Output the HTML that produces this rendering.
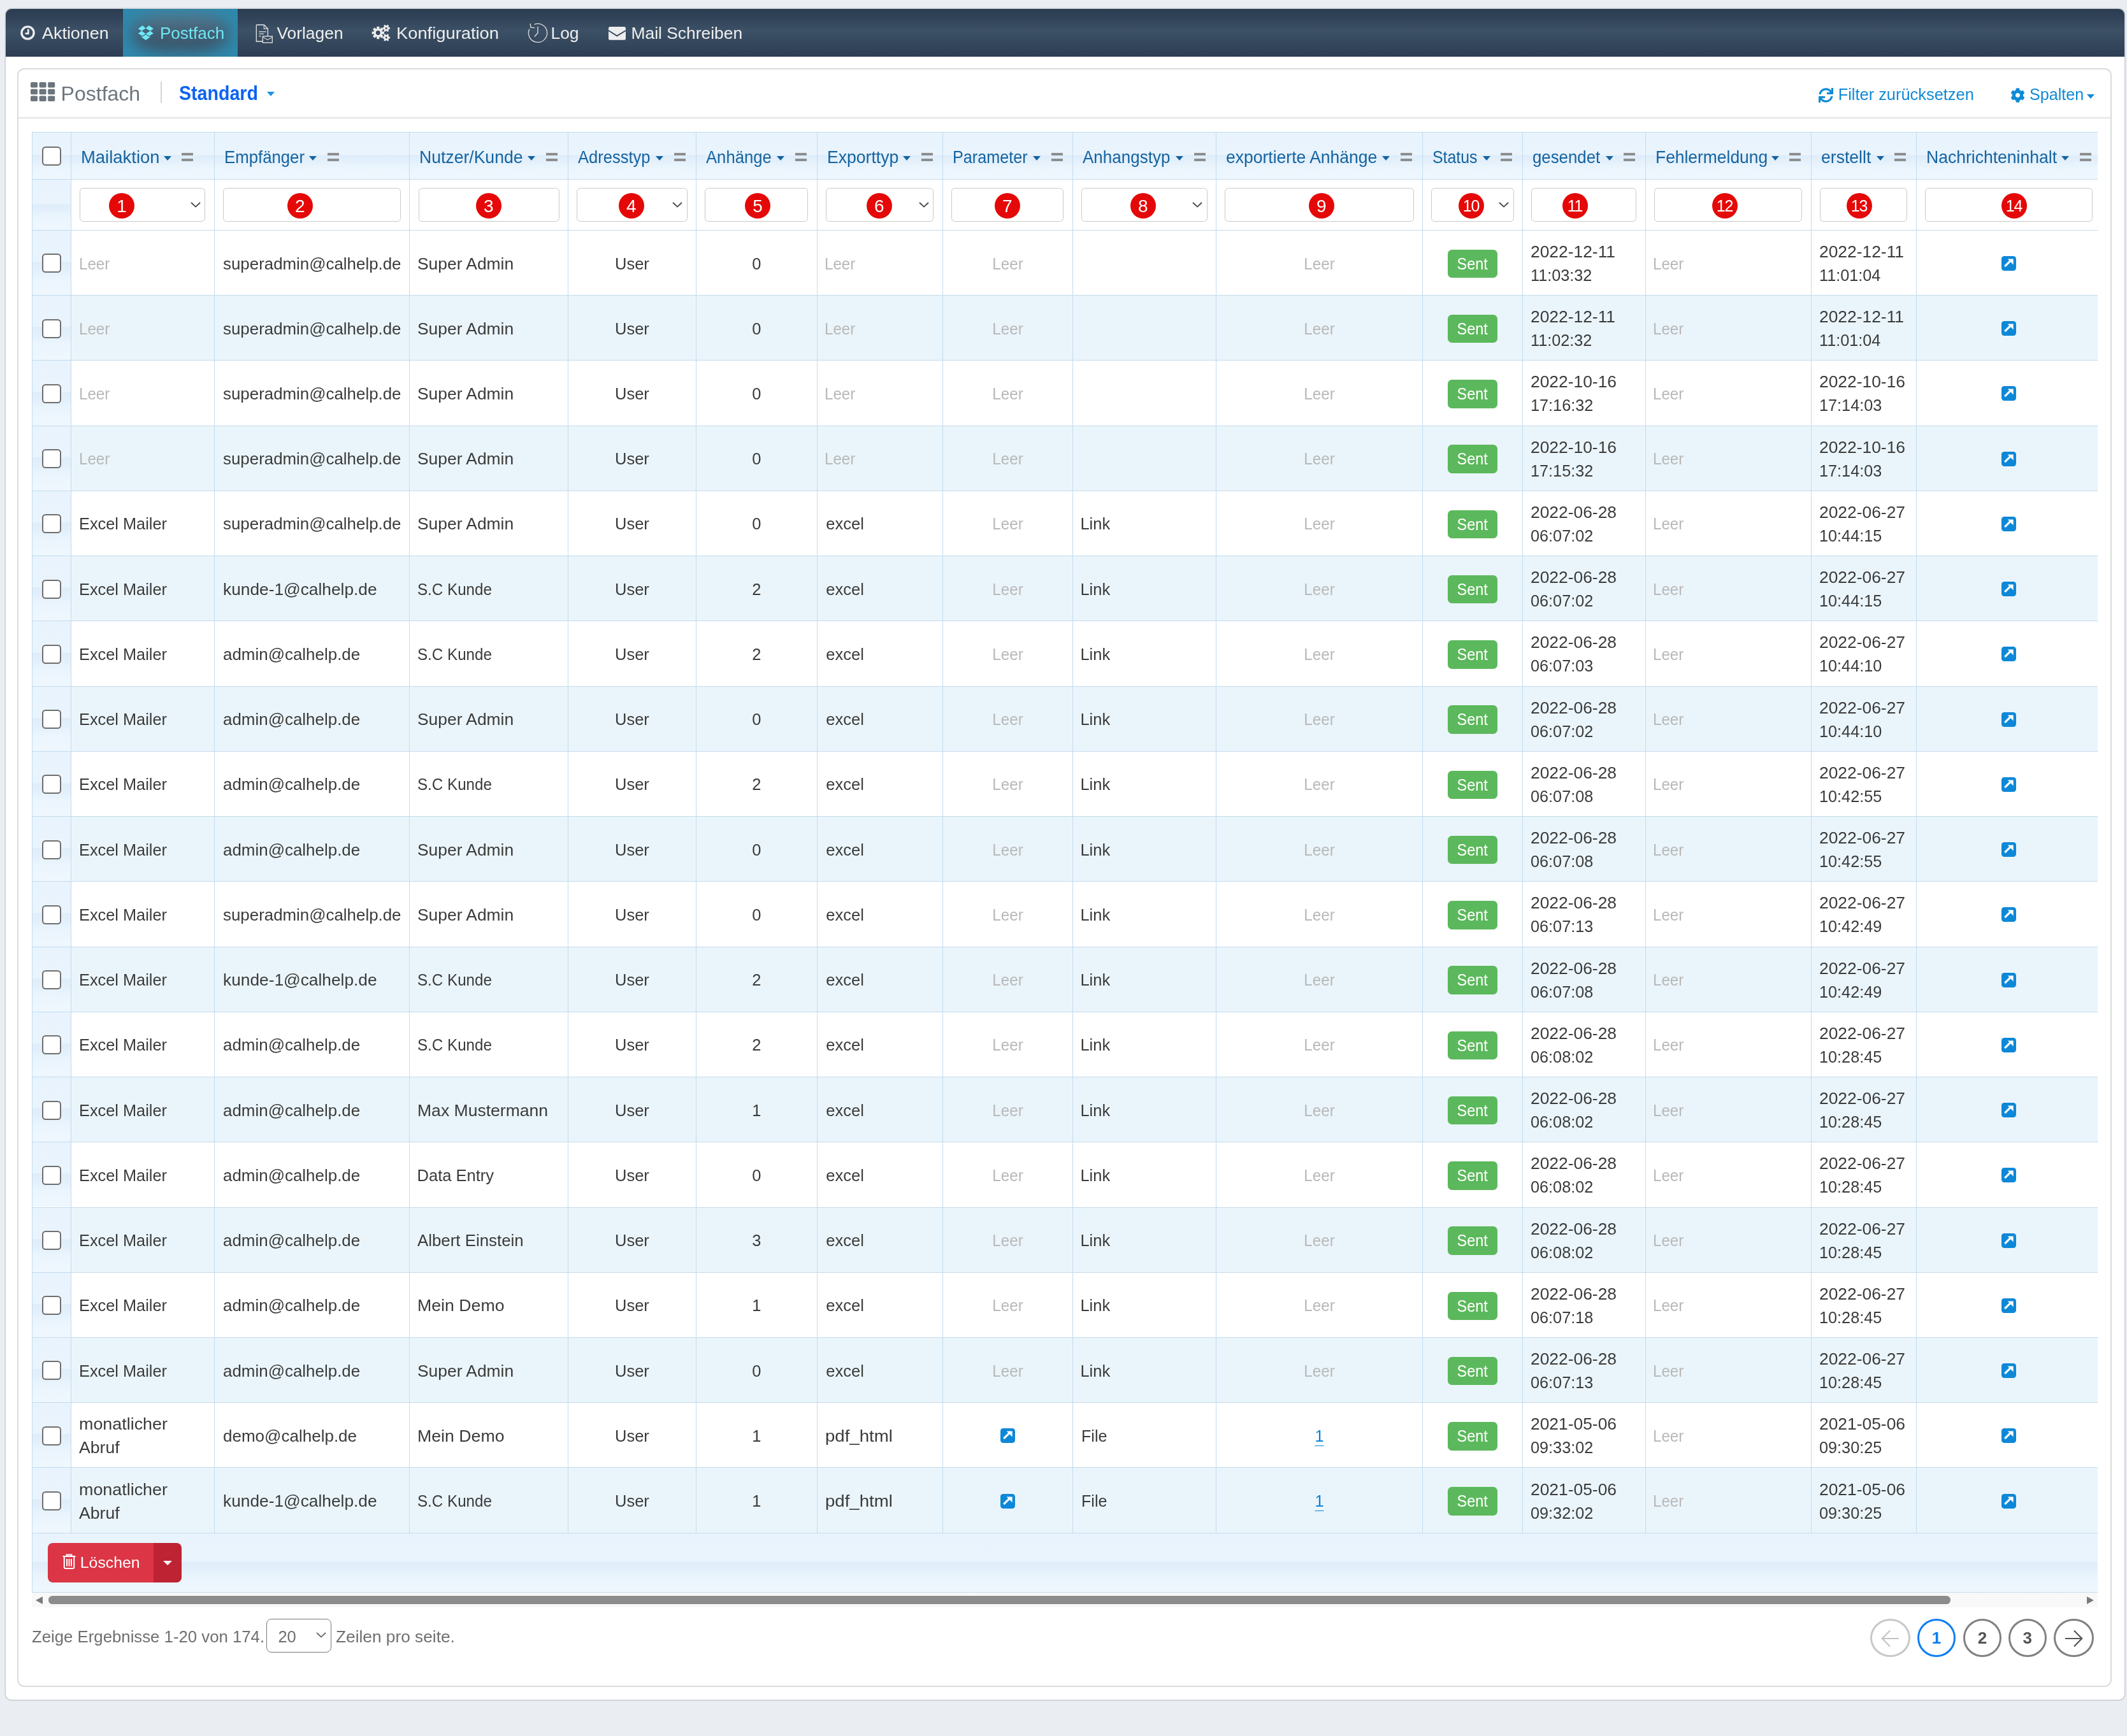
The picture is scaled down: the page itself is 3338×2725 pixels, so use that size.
<!DOCTYPE html><html><head><meta charset="utf-8"><title>Postfach</title><style>
*{box-sizing:border-box;margin:0;padding:0}
html,body{width:3338px;height:2725px;overflow:hidden;background:#eaedf2;font-family:"Liberation Sans",sans-serif;}
.a{position:absolute}
.outer{left:9px;top:13.5px;width:3325px;height:2654.5px;background:#fff;border-radius:9px;box-shadow:0 0 0 1.5px #c9ced3,0 1px 2px rgba(0,0,0,.10)}
.nav{left:9px;top:13.5px;width:3325px;height:75.3px;border-radius:9px 9px 0 0;
  background:linear-gradient(to bottom,#2b3c51 0%,#324459 20%,#3c5066 46%,#34475c 72%,#2c3d52 100%)}
.tab-act{left:193px;top:13.5px;width:180px;height:75.3px;background:#2e89ad;overflow:hidden}
.tab-act:before{content:"";position:absolute;left:14px;top:7px;width:152px;height:62px;border-radius:38%;background:linear-gradient(to bottom,#587b90,#3f5b70 55%,#395469);filter:blur(11px)}
.nt{color:#eeeeee;font-size:26.4px;line-height:30px;white-space:nowrap}
.card{left:27px;top:107px;width:3287px;height:2541px;border:2px solid #dadddd;border-radius:11px;background:#fff}
.hline{left:29px;top:184px;width:3283px;height:2px;background:#e0e2e3}
.tline{background:#c4dbed}
.cell{position:absolute;display:flex;align-items:center;padding:3px 14px 0 14px;font-size:25.5px;line-height:37px;color:#3b3b3b;white-space:nowrap}
.cell.c{justify-content:center}
.cell span{display:inline-block}
.leer{color:#b9b9b9}
.lnk{color:#0b84d4;text-decoration:underline;text-underline-offset:6px;text-decoration-thickness:1.2px}
.cell span.badge{display:inline-block;background:#5cb85c;color:#fff;font-size:25px;line-height:44.5px;height:44.5px;padding:0 13px;border-radius:6.5px;margin-top:0px}
.ico{display:inline-block;width:23px;height:23px;line-height:0;margin-top:-1px}
.ht{font-size:26.9px;color:#1664a0;white-space:nowrap;line-height:30px}
.caret{width:0;height:0;border-left:6.8px solid transparent;border-right:6.8px solid transparent;border-top:7px solid #1664a0}
.handle{width:18px;height:13px;border-top:4.8px solid #8e8e8e;border-bottom:4.8px solid #8e8e8e}
.inp{background:#fff;border:1.5px solid #c9c9c9;border-radius:5.5px}
.chev{width:15.5px;height:8.5px}
.chev svg,.a svg{display:block}
.rb{width:40px;height:40px;border-radius:50%;background:#e50808;color:#fff;font-size:28px;line-height:41px;text-align:center;font-family:"Liberation Sans",sans-serif}
.rb.two{font-size:25px;letter-spacing:-1.2px;text-indent:-1px}
.cb{width:30px;height:30px;border:2.2px solid #6e6e6e;border-radius:5.5px;background:#fff}
.grad{background:linear-gradient(to bottom,#e8f3fd 0%,#eaf4fd 48%,#dfedfa 50%,#e3f0fb 62%,#ebf5fd 76%,#eff7fe 100%)}
.ft{font-size:25.5px;color:#6f6f6f;white-space:nowrap;line-height:30px}
.pg{width:60px;height:60px;border-radius:50%;border:3px solid #808080;display:flex;align-items:center;justify-content:center;font-weight:bold;font-size:26px;color:#555}
</style></head><body><div id="root" style="position:absolute;left:0;top:0;width:3338px;height:2725px;will-change:transform">
<div class="a outer"></div>
<div class="a nav"></div>
<div class="a tab-act"></div>
<svg class="a" style="left:32px;top:40px" width="23" height="23" viewBox="0 0 23 23"><circle cx="11.5" cy="11.5" r="9.6" fill="none" stroke="#eee" stroke-width="3.4"/><path d="M12.3 5.8 V12.6 H7.6" fill="none" stroke="#eee" stroke-width="2.6"/></svg>
<div class="a nt" style="left:65.8px;top:37.15px;transform:scaleX(1.02);transform-origin:0 0">Aktionen</div>
<svg class="a" style="left:210px;top:32px" width="40" height="38" viewBox="0 0 40 38"><g fill="#6fe8f5"><path d="M6.6 13.1 L13.8 8.1 L18.6 12.4 L12.3 16.6 Z"/><path d="M18.6 12.4 L23.6 8.1 L30.9 13.1 L26 16.6 Z"/><path d="M6.6 20.6 L12.3 16.6 L18.6 20.9 L13.6 24.6 Z"/><path d="M18.6 20.9 L26 16.6 L30.9 20.6 L24 24.6 Z"/><path d="M10.9 25.6 L13.6 25.4 L18.8 22.1 L24 25.4 L26.7 25.6 L18.8 30.9 Z"/></g><path d="M13.3 25.2 L18.8 21.7 L24.3 25.2" fill="none" stroke="#3f5d72" stroke-width="0.9"/></svg>
<div class="a nt" style="left:251px;top:37.15px;color:#6fe6f3;transform:scaleX(0.985);transform-origin:0 0">Postfach</div>
<svg class="a" style="left:401px;top:38.3px" width="28" height="30" viewBox="0 0 28 30"><path d="M1.3 1 H13.3 L19.3 7 V22 M1.3 1 V27 H11.5" fill="none" stroke="#e6e6e6" stroke-width="1.3"/><path d="M13.3 1.5 V7 H19" fill="none" stroke="#c8cdd3" stroke-width="1.3"/><path d="M5.3 11.7 H16.5 M5.3 15.3 H13 M5.3 18.8 H8.5" stroke="#c0c6cd" stroke-width="1.4"/><rect x="11.3" y="19" width="15" height="10" fill="#34475c" stroke="#e6e6e6" stroke-width="1.3"/><path d="M12 20.5 L19 24.5 L26 20.5" fill="none" stroke="#c8cdd3" stroke-width="1.3"/></svg>
<div class="a nt" style="left:434.4px;top:37.15px">Vorlagen</div>
<svg class="a" style="left:583px;top:37px" width="30" height="30" viewBox="0 0 30 30"><g fill="#eee"><circle cx="10.3" cy="14.5" r="6.6"/><rect x="8.2" y="4.85" width="4.2" height="19.3" rx="0.4" transform="rotate(0 10.3 14.5)"/><rect x="8.2" y="4.85" width="4.2" height="19.3" rx="0.4" transform="rotate(45 10.3 14.5)"/><rect x="8.2" y="4.85" width="4.2" height="19.3" rx="0.4" transform="rotate(90 10.3 14.5)"/><rect x="8.2" y="4.85" width="4.2" height="19.3" rx="0.4" transform="rotate(135 10.3 14.5)"/><circle cx="23.2" cy="7.3" r="4.3"/><rect x="21.9" y="1.4" width="2.6" height="11.8" rx="0.4" transform="rotate(90 23.2 7.3)"/><rect x="21.9" y="1.4" width="2.6" height="11.8" rx="0.4" transform="rotate(150 23.2 7.3)"/><rect x="21.9" y="1.4" width="2.6" height="11.8" rx="0.4" transform="rotate(210 23.2 7.3)"/><circle cx="23.2" cy="22" r="4.3"/><rect x="21.9" y="16.1" width="2.6" height="11.8" rx="0.4" transform="rotate(90 23.2 22)"/><rect x="21.9" y="16.1" width="2.6" height="11.8" rx="0.4" transform="rotate(150 23.2 22)"/><rect x="21.9" y="16.1" width="2.6" height="11.8" rx="0.4" transform="rotate(210 23.2 22)"/></g><circle cx="10.3" cy="14.5" r="3.4" fill="#36495f"/><circle cx="23.2" cy="7.3" r="1.5" fill="#36495f"/><circle cx="23.2" cy="22" r="1.5" fill="#36495f"/></svg>
<div class="a nt" style="left:621.5px;top:37.15px;transform:scaleX(1.035);transform-origin:0 0">Konfiguration</div>
<svg class="a" style="left:820px;top:25px" width="44" height="50" viewBox="0 0 44 50"><path d="M10.77 20.63 A14.6 14.6 0 1 0 18.53 13.26" fill="none" stroke="#dcdcdc" stroke-width="1.35"/><path d="M12.3 12 L12.9 18.2 L19.2 18.6" fill="none" stroke="#dcdcdc" stroke-width="1.4"/><path d="M24 16.4 V26.8 L18.8 32.4" fill="none" stroke="#dcdcdc" stroke-width="1.4"/></svg>
<div class="a nt" style="left:864.5px;top:37.15px">Log</div>
<svg class="a" style="left:955px;top:42.2px" width="27" height="21" viewBox="0 0 27 21"><rect x="0" y="0" width="27" height="20.8" rx="2.6" fill="#eee"/><path d="M0 6 L13.3 14.4 L27 6" fill="none" stroke="#34475c" stroke-width="1.9"/></svg>
<div class="a nt" style="left:990.5px;top:37.15px">Mail Schreiben</div>
<div class="a card"></div>
<div class="a hline"></div>
<svg class="a" style="left:47.9px;top:129px" width="39" height="31" viewBox="0 0 39 31"><rect x="0" y="0" width="11" height="8.6" rx="1.8" fill="#6c757d"/><rect x="13.6" y="0" width="11" height="8.6" rx="1.8" fill="#6c757d"/><rect x="27.2" y="0" width="11" height="8.6" rx="1.8" fill="#6c757d"/><rect x="0" y="10.7" width="11" height="8.6" rx="1.8" fill="#6c757d"/><rect x="13.6" y="10.7" width="11" height="8.6" rx="1.8" fill="#6c757d"/><rect x="27.2" y="10.7" width="11" height="8.6" rx="1.8" fill="#6c757d"/><rect x="0" y="21.4" width="11" height="8.6" rx="1.8" fill="#6c757d"/><rect x="13.6" y="21.4" width="11" height="8.6" rx="1.8" fill="#6c757d"/><rect x="27.2" y="21.4" width="11" height="8.6" rx="1.8" fill="#6c757d"/></svg>
<div class="a" style="left:95.6px;top:124.8px;font-size:32px;line-height:44px;color:#6c757d;white-space:nowrap">Postfach</div>
<div class="a" style="left:252px;top:128px;width:1.5px;height:34px;background:#d4d4d4"></div>
<div class="a" style="left:281px;top:124.76px;font-size:31px;line-height:44px;color:#0b63f0;font-weight:bold;white-space:nowrap;transform:scaleX(0.922);transform-origin:0 0">Standard</div>
<div class="a caret" style="left:419.3px;top:144px;border-left-width:6.7px;border-right-width:6.7px;border-top-width:7.3px;border-top-color:#1a92e2"></div>
<svg class="a" style="left:2853.5px;top:138px" width="23" height="23" viewBox="0 0 512 512"><path fill="#118ad6" d="M440.65 12.57l4 82.77A247.16 247.16 0 0 0 255.83 8C134.73 8 33.91 94.92 12.29 209.82A12 12 0 0 0 24.09 224h49.05a12 12 0 0 0 11.67-9.26 175.91 175.91 0 0 1 317-56.94l-101.46-4.86a12 12 0 0 0-12.57 12v47.41a12 12 0 0 0 12 12H500a12 12 0 0 0 12-12V12a12 12 0 0 0-12-12h-47.37a12 12 0 0 0-11.98 12.57zM255.83 432a175.61 175.61 0 0 1-146-77.8l101.8 4.87a12 12 0 0 0 12.57-12v-47.4a12 12 0 0 0-12-12H12a12 12 0 0 0-12 12V500a12 12 0 0 0 12 12h47.35a12 12 0 0 0 12-12.6l-4.15-82.57A247.17 247.17 0 0 0 255.83 504c121.11 0 221.93-86.92 243.55-201.82a12 12 0 0 0-11.8-14.18h-49.05a12 12 0 0 0-11.67 9.26A175.86 175.86 0 0 1 255.83 432z"/></svg>
<div class="a" style="left:2884.7px;top:130px;font-size:25.4px;line-height:36px;color:#118ad6;white-space:nowrap">Filter zurücksetzen</div>
<svg class="a" style="left:3154.6px;top:138px" width="23" height="23" viewBox="0 0 512 512"><path fill="#118ad6" d="M487.4 315.7l-42.6-24.6c4.3-23.2 4.3-47 0-70.2l42.6-24.6c4.9-2.8 7.1-8.6 5.5-14-11.1-35.6-30-67.8-54.7-94.6-3.8-4.1-10-5.1-14.8-2.3L380.8 110c-17.9-15.4-38.5-27.3-60.8-35.1V25.8c0-5.6-3.9-10.5-9.4-11.7-36.7-8.2-74.3-7.8-109.2 0-5.5 1.2-9.4 6.1-9.4 11.7V75c-22.2 7.9-42.8 19.8-60.8 35.1L88.7 85.5c-4.9-2.8-11-1.9-14.8 2.3-24.7 26.7-43.6 58.9-54.7 94.6-1.7 5.4.6 11.2 5.5 14L67.3 221c-4.3 23.2-4.3 47 0 70.2l-42.6 24.6c-4.9 2.8-7.1 8.6-5.5 14 11.1 35.6 30 67.8 54.7 94.6 3.8 4.1 10 5.1 14.8 2.3l42.6-24.6c17.9 15.4 38.5 27.3 60.8 35.1v49.2c0 5.6 3.9 10.5 9.4 11.7 36.7 8.2 74.3 7.8 109.2 0 5.5-1.2 9.4-6.1 9.4-11.7v-49.2c22.2-7.9 42.8-19.8 60.8-35.1l42.6 24.6c4.9 2.8 11 1.9 14.8-2.3 24.7-26.7 43.6-58.9 54.7-94.6 1.5-5.5-.7-11.3-5.6-14.1zM256 336c-44.1 0-80-35.9-80-80s35.9-80 80-80 80 35.9 80 80-35.9 80-80 80z"/></svg>
<div class="a" style="left:3185px;top:130px;font-size:25.1px;line-height:36px;color:#118ad6;white-space:nowrap">Spalten</div>
<div class="a caret" style="left:3275px;top:147.5px;border-top-color:#118ad6;border-left-width:6.8px;border-right-width:6.8px;border-top-width:7px"></div>
<div class="a" style="left:50px;top:207px;width:3242px;height:2316.5px;overflow:hidden">
<div class="a grad" style="left:0px;top:0px;width:3247px;height:74px"></div>
<div class="a grad" style="left:0px;top:74px;width:61px;height:80px"></div>
<div class="a grad" style="left:0px;top:154px;width:61px;height:102px"></div>
<div class="a " style="left:61px;top:256px;width:3186px;height:102px;background:#eaf5fb"></div>
<div class="a grad" style="left:0px;top:256px;width:61px;height:102px"></div>
<div class="a grad" style="left:0px;top:358px;width:61px;height:103px"></div>
<div class="a " style="left:61px;top:461px;width:3186px;height:102px;background:#eaf5fb"></div>
<div class="a grad" style="left:0px;top:461px;width:61px;height:102px"></div>
<div class="a grad" style="left:0px;top:563px;width:61px;height:102px"></div>
<div class="a " style="left:61px;top:665px;width:3186px;height:102px;background:#eaf5fb"></div>
<div class="a grad" style="left:0px;top:665px;width:61px;height:102px"></div>
<div class="a grad" style="left:0px;top:767px;width:61px;height:103px"></div>
<div class="a " style="left:61px;top:870px;width:3186px;height:102px;background:#eaf5fb"></div>
<div class="a grad" style="left:0px;top:870px;width:61px;height:102px"></div>
<div class="a grad" style="left:0px;top:972px;width:61px;height:102px"></div>
<div class="a " style="left:61px;top:1074px;width:3186px;height:102px;background:#eaf5fb"></div>
<div class="a grad" style="left:0px;top:1074px;width:61px;height:102px"></div>
<div class="a grad" style="left:0px;top:1176px;width:61px;height:103px"></div>
<div class="a " style="left:61px;top:1279px;width:3186px;height:102px;background:#eaf5fb"></div>
<div class="a grad" style="left:0px;top:1279px;width:61px;height:102px"></div>
<div class="a grad" style="left:0px;top:1381px;width:61px;height:102px"></div>
<div class="a " style="left:61px;top:1483px;width:3186px;height:102px;background:#eaf5fb"></div>
<div class="a grad" style="left:0px;top:1483px;width:61px;height:102px"></div>
<div class="a grad" style="left:0px;top:1585px;width:61px;height:102px"></div>
<div class="a " style="left:61px;top:1688px;width:3186px;height:102px;background:#eaf5fb"></div>
<div class="a grad" style="left:0px;top:1688px;width:61px;height:102px"></div>
<div class="a grad" style="left:0px;top:1790px;width:61px;height:102px"></div>
<div class="a " style="left:61px;top:1892px;width:3186px;height:102px;background:#eaf5fb"></div>
<div class="a grad" style="left:0px;top:1892px;width:61px;height:102px"></div>
<div class="a grad" style="left:0px;top:1994px;width:61px;height:102px"></div>
<div class="a " style="left:61px;top:2096px;width:3186px;height:103px;background:#eaf5fb"></div>
<div class="a grad" style="left:0px;top:2096px;width:61px;height:103px"></div>
<div class="a grad" style="left:0px;top:2199px;width:3247px;height:93px"></div>
<div class="a tline" style="left:0;top:0px;width:3247.6px;height:1px"></div>
<div class="a tline" style="left:0;top:74px;width:3247.6px;height:1px"></div>
<div class="a tline" style="left:0;top:154px;width:3247.6px;height:1px"></div>
<div class="a tline" style="left:0;top:256px;width:3247.6px;height:1px"></div>
<div class="a tline" style="left:0;top:358px;width:3247.6px;height:1px"></div>
<div class="a tline" style="left:0;top:461px;width:3247.6px;height:1px"></div>
<div class="a tline" style="left:0;top:563px;width:3247.6px;height:1px"></div>
<div class="a tline" style="left:0;top:665px;width:3247.6px;height:1px"></div>
<div class="a tline" style="left:0;top:767px;width:3247.6px;height:1px"></div>
<div class="a tline" style="left:0;top:870px;width:3247.6px;height:1px"></div>
<div class="a tline" style="left:0;top:972px;width:3247.6px;height:1px"></div>
<div class="a tline" style="left:0;top:1074px;width:3247.6px;height:1px"></div>
<div class="a tline" style="left:0;top:1176px;width:3247.6px;height:1px"></div>
<div class="a tline" style="left:0;top:1279px;width:3247.6px;height:1px"></div>
<div class="a tline" style="left:0;top:1381px;width:3247.6px;height:1px"></div>
<div class="a tline" style="left:0;top:1483px;width:3247.6px;height:1px"></div>
<div class="a tline" style="left:0;top:1585px;width:3247.6px;height:1px"></div>
<div class="a tline" style="left:0;top:1688px;width:3247.6px;height:1px"></div>
<div class="a tline" style="left:0;top:1790px;width:3247.6px;height:1px"></div>
<div class="a tline" style="left:0;top:1892px;width:3247.6px;height:1px"></div>
<div class="a tline" style="left:0;top:1994px;width:3247.6px;height:1px"></div>
<div class="a tline" style="left:0;top:2096px;width:3247.6px;height:1px"></div>
<div class="a tline" style="left:0;top:2199px;width:3247.6px;height:1px"></div>
<div class="a tline" style="left:0;top:2292px;width:3247.6px;height:1px"></div>
<div class="a tline" style="left:0;top:0;width:1px;height:2292.6px"></div>
<div class="a tline" style="left:61px;top:0;width:1px;height:2199px"></div>
<div class="a tline" style="left:286px;top:0;width:1px;height:2199px"></div>
<div class="a tline" style="left:592px;top:0;width:1px;height:2199px"></div>
<div class="a tline" style="left:841px;top:0;width:1px;height:2199px"></div>
<div class="a tline" style="left:1042px;top:0;width:1px;height:2199px"></div>
<div class="a tline" style="left:1232px;top:0;width:1px;height:2199px"></div>
<div class="a tline" style="left:1429px;top:0;width:1px;height:2199px"></div>
<div class="a tline" style="left:1633px;top:0;width:1px;height:2199px"></div>
<div class="a tline" style="left:1858px;top:0;width:1px;height:2199px"></div>
<div class="a tline" style="left:2182px;top:0;width:1px;height:2199px"></div>
<div class="a tline" style="left:2339px;top:0;width:1px;height:2199px"></div>
<div class="a tline" style="left:2532px;top:0;width:1px;height:2199px"></div>
<div class="a tline" style="left:2792px;top:0;width:1px;height:2199px"></div>
<div class="a tline" style="left:2957px;top:0;width:1px;height:2199px"></div>
<div class="a tline" style="left:3247px;top:0;width:1px;height:2199px"></div>
<div class="a cb" style="left:16.1px;top:23.3px"></div>
<div class="a ht" style="left:77.1px;top:24.88px;transform:scaleX(1.02);transform-origin:0 0">Mailaktion</div>
<div class="a caret" style="left:207.1px;top:37.8px"></div>
<div class="a handle" style="left:235.3px;top:33px"></div>
<div class="a ht" style="left:301.9px;top:24.88px;transform:scaleX(0.958);transform-origin:0 0">Empfänger</div>
<div class="a caret" style="left:435px;top:37.8px"></div>
<div class="a handle" style="left:463.8px;top:33px"></div>
<div class="a ht" style="left:608.2px;top:24.88px;transform:scaleX(0.988);transform-origin:0 0">Nutzer/Kunde</div>
<div class="a caret" style="left:777.9px;top:37.8px"></div>
<div class="a handle" style="left:807.3px;top:33px"></div>
<div class="a ht" style="left:857px;top:24.88px;transform:scaleX(0.949);transform-origin:0 0">Adresstyp</div>
<div class="a caret" style="left:978.8px;top:37.8px"></div>
<div class="a handle" style="left:1007.8px;top:33px"></div>
<div class="a ht" style="left:1058.1px;top:24.88px;transform:scaleX(0.954);transform-origin:0 0">Anhänge</div>
<div class="a caret" style="left:1169.1px;top:37.8px"></div>
<div class="a handle" style="left:1198.1px;top:33px"></div>
<div class="a ht" style="left:1247.9px;top:24.88px;transform:scaleX(0.989);transform-origin:0 0">Exporttyp</div>
<div class="a caret" style="left:1367.1px;top:37.8px"></div>
<div class="a handle" style="left:1395.9px;top:33px"></div>
<div class="a ht" style="left:1444.9px;top:24.88px;transform:scaleX(0.937);transform-origin:0 0">Parameter</div>
<div class="a caret" style="left:1571px;top:37.8px"></div>
<div class="a handle" style="left:1599.8px;top:33px"></div>
<div class="a ht" style="left:1649px;top:24.88px;transform:scaleX(0.967);transform-origin:0 0">Anhangstyp</div>
<div class="a caret" style="left:1795px;top:37.8px"></div>
<div class="a handle" style="left:1823.8px;top:33px"></div>
<div class="a ht" style="left:1874.1px;top:24.88px;transform:scaleX(0.986);transform-origin:0 0">exportierte Anhänge</div>
<div class="a caret" style="left:2119.3px;top:37.8px"></div>
<div class="a handle" style="left:2147.5px;top:33px"></div>
<div class="a ht" style="left:2198.1px;top:24.88px;transform:scaleX(0.925);transform-origin:0 0">Status</div>
<div class="a caret" style="left:2276.7px;top:37.8px"></div>
<div class="a handle" style="left:2304.9px;top:33px"></div>
<div class="a ht" style="left:2355.1px;top:24.88px;transform:scaleX(0.96);transform-origin:0 0">gesendet</div>
<div class="a caret" style="left:2469.5px;top:37.8px"></div>
<div class="a handle" style="left:2497.7px;top:33px"></div>
<div class="a ht" style="left:2548px;top:24.88px;transform:scaleX(0.982);transform-origin:0 0">Fehlermeldung</div>
<div class="a caret" style="left:2729.6px;top:37.8px"></div>
<div class="a handle" style="left:2758.1px;top:33px"></div>
<div class="a ht" style="left:2808px;top:24.88px;transform:scaleX(0.989);transform-origin:0 0">erstellt</div>
<div class="a caret" style="left:2894.8px;top:37.8px"></div>
<div class="a handle" style="left:2923px;top:33px"></div>
<div class="a ht" style="left:2973px;top:24.88px;transform:scaleX(0.987);transform-origin:0 0">Nachrichteninhalt</div>
<div class="a caret" style="left:3185px;top:37.8px"></div>
<div class="a handle" style="left:3213.5px;top:33px"></div>
<div class="a inp" style="left:75.4px;top:88px;width:197px;height:53px"></div>
<div class="a chev" style="left:249.2px;top:110.2px"><svg width="16" height="9" viewBox="0 0 16 9"><path d="M1 1 L8 7.6 L15 1" fill="none" stroke="#444" stroke-width="1.8"/></svg></div>
<div class="a rb" style="left:121px;top:95.8px">1</div>
<div class="a inp" style="left:300.2px;top:88px;width:278.5px;height:53px"></div>
<div class="a rb" style="left:400.7px;top:95.8px">2</div>
<div class="a inp" style="left:606.5px;top:88px;width:221px;height:53px"></div>
<div class="a rb" style="left:696.9px;top:95.8px">3</div>
<div class="a inp" style="left:855.3px;top:88px;width:173.3px;height:53px"></div>
<div class="a chev" style="left:1005.4px;top:110.2px"><svg width="16" height="9" viewBox="0 0 16 9"><path d="M1 1 L8 7.6 L15 1" fill="none" stroke="#444" stroke-width="1.8"/></svg></div>
<div class="a rb" style="left:920.8px;top:95.8px">4</div>
<div class="a inp" style="left:1056.4px;top:88px;width:162px;height:53px"></div>
<div class="a rb" style="left:1119px;top:95.8px">5</div>
<div class="a inp" style="left:1246.2px;top:88px;width:169.2px;height:53px"></div>
<div class="a chev" style="left:1392.2px;top:110.2px"><svg width="16" height="9" viewBox="0 0 16 9"><path d="M1 1 L8 7.6 L15 1" fill="none" stroke="#444" stroke-width="1.8"/></svg></div>
<div class="a rb" style="left:1309.9px;top:95.8px">6</div>
<div class="a inp" style="left:1443.2px;top:88px;width:176.3px;height:53px"></div>
<div class="a rb" style="left:1510.9px;top:95.8px">7</div>
<div class="a inp" style="left:1647.3px;top:88px;width:197.3px;height:53px"></div>
<div class="a chev" style="left:1821.4px;top:110.2px"><svg width="16" height="9" viewBox="0 0 16 9"><path d="M1 1 L8 7.6 L15 1" fill="none" stroke="#444" stroke-width="1.8"/></svg></div>
<div class="a rb" style="left:1723.9px;top:95.8px">8</div>
<div class="a inp" style="left:1872.4px;top:88px;width:296.2px;height:53px"></div>
<div class="a rb" style="left:2003.8px;top:95.8px">9</div>
<div class="a inp" style="left:2196.4px;top:88px;width:129.2px;height:53px"></div>
<div class="a chev" style="left:2302.4px;top:110.2px"><svg width="16" height="9" viewBox="0 0 16 9"><path d="M1 1 L8 7.6 L15 1" fill="none" stroke="#444" stroke-width="1.8"/></svg></div>
<div class="a rb two" style="left:2238.9px;top:95.8px">10</div>
<div class="a inp" style="left:2353.4px;top:88px;width:165.1px;height:53px"></div>
<div class="a rb two" style="left:2402px;top:95.8px">11</div>
<div class="a inp" style="left:2546.3px;top:88px;width:232.2px;height:53px"></div>
<div class="a rb two" style="left:2637px;top:95.8px">12</div>
<div class="a inp" style="left:2806.3px;top:88px;width:137.2px;height:53px"></div>
<div class="a rb two" style="left:2847.9px;top:95.8px">13</div>
<div class="a inp" style="left:2971.3px;top:88px;width:262.4px;height:53px"></div>
<div class="a rb two" style="left:3090.9px;top:95.8px">14</div>
<div class="a cb" style="left:16.1px;top:191.4px"></div>
<div class="cell" style="left:61.5px;top:154.4px;width:224.8px;height:102.24px"><span class="leer" style="transform:scaleX(0.947);transform-origin:0 50%;margin-left:-2px">Leer</span></div>
<div class="cell" style="left:286.3px;top:154.4px;width:306.3px;height:102.24px"><div><div><span style="transform:scaleX(1.015);transform-origin:0 50%">superadmin@calhelp.de</span></div></div></div>
<div class="cell" style="left:592.6px;top:154.4px;width:248.8px;height:102.24px"><div><div><span style="transform:scaleX(1.035);transform-origin:0 50%;margin-left:-2px">Super Admin</span></div></div></div>
<div class="cell c" style="left:841.4px;top:154.4px;width:201.1px;height:102.24px"><div><div><span>User</span></div></div></div>
<div class="cell c" style="left:1042.5px;top:154.4px;width:189.8px;height:102.24px"><div><div><span>0</span></div></div></div>
<div class="cell" style="left:1232.3px;top:154.4px;width:197px;height:102.24px"><span class="leer" style="transform:scaleX(0.947);transform-origin:0 50%;margin-left:-2px">Leer</span></div>
<div class="cell c" style="left:1429.3px;top:154.4px;width:204.1px;height:102.24px"><span class="leer" style="transform:scaleX(0.947);transform-origin:50% 50%">Leer</span></div>
<div class="cell" style="left:1633.4px;top:154.4px;width:225.1px;height:102.24px"><div><div><span style="margin-left:-1.8px"></span></div></div></div>
<div class="cell c" style="left:1858.5px;top:154.4px;width:324px;height:102.24px"><span class="leer" style="transform:scaleX(0.947);transform-origin:50% 50%">Leer</span></div>
<div class="cell c" style="left:2182.5px;top:154.4px;width:157px;height:102.24px"><span class="badge"><span style="transform:scaleX(0.94);transform-origin:50% 50%">Sent</span></span></div>
<div class="cell" style="left:2339.5px;top:154.4px;width:192.9px;height:102.24px"><div><div><span style="transform:scaleX(1.035);transform-origin:0 50%;margin-left:-1.5px">2022-12-11</span></div><div><span style="transform:scaleX(0.99);transform-origin:0 50%;margin-left:-1.5px">11:03:32</span></div></div></div>
<div class="cell" style="left:2532.4px;top:154.4px;width:260px;height:102.24px"><span class="leer" style="transform:scaleX(0.947);transform-origin:0 50%;margin-left:-2px">Leer</span></div>
<div class="cell" style="left:2792.4px;top:154.4px;width:165px;height:102.24px"><div><div><span style="transform:scaleX(1.035);transform-origin:0 50%;margin-left:-1.5px">2022-12-11</span></div><div><span style="transform:scaleX(0.99);transform-origin:0 50%;margin-left:-1.5px">11:01:04</span></div></div></div>
<div class="cell c" style="left:2957.4px;top:154.4px;width:290.2px;height:102.24px"><span class="ico"><svg width="23" height="23" viewBox="0 0 23 23"><rect x="0" y="0" width="23" height="23" rx="4.5" fill="#0d88d8"/><path d="M5.2 16.2 L13.6 7.8" stroke="#fff" stroke-width="3.2" stroke-linecap="butt"/><path d="M9.6 4.4 H18.6 V13.4 Z" fill="#fff"/></svg></span></div>
<div class="a cb" style="left:16.1px;top:293.64px"></div>
<div class="cell" style="left:61.5px;top:256.64px;width:224.8px;height:102.24px"><span class="leer" style="transform:scaleX(0.947);transform-origin:0 50%;margin-left:-2px">Leer</span></div>
<div class="cell" style="left:286.3px;top:256.64px;width:306.3px;height:102.24px"><div><div><span style="transform:scaleX(1.015);transform-origin:0 50%">superadmin@calhelp.de</span></div></div></div>
<div class="cell" style="left:592.6px;top:256.64px;width:248.8px;height:102.24px"><div><div><span style="transform:scaleX(1.035);transform-origin:0 50%;margin-left:-2px">Super Admin</span></div></div></div>
<div class="cell c" style="left:841.4px;top:256.64px;width:201.1px;height:102.24px"><div><div><span>User</span></div></div></div>
<div class="cell c" style="left:1042.5px;top:256.64px;width:189.8px;height:102.24px"><div><div><span>0</span></div></div></div>
<div class="cell" style="left:1232.3px;top:256.64px;width:197px;height:102.24px"><span class="leer" style="transform:scaleX(0.947);transform-origin:0 50%;margin-left:-2px">Leer</span></div>
<div class="cell c" style="left:1429.3px;top:256.64px;width:204.1px;height:102.24px"><span class="leer" style="transform:scaleX(0.947);transform-origin:50% 50%">Leer</span></div>
<div class="cell" style="left:1633.4px;top:256.64px;width:225.1px;height:102.24px"><div><div><span style="margin-left:-1.8px"></span></div></div></div>
<div class="cell c" style="left:1858.5px;top:256.64px;width:324px;height:102.24px"><span class="leer" style="transform:scaleX(0.947);transform-origin:50% 50%">Leer</span></div>
<div class="cell c" style="left:2182.5px;top:256.64px;width:157px;height:102.24px"><span class="badge"><span style="transform:scaleX(0.94);transform-origin:50% 50%">Sent</span></span></div>
<div class="cell" style="left:2339.5px;top:256.64px;width:192.9px;height:102.24px"><div><div><span style="transform:scaleX(1.035);transform-origin:0 50%;margin-left:-1.5px">2022-12-11</span></div><div><span style="transform:scaleX(0.99);transform-origin:0 50%;margin-left:-1.5px">11:02:32</span></div></div></div>
<div class="cell" style="left:2532.4px;top:256.64px;width:260px;height:102.24px"><span class="leer" style="transform:scaleX(0.947);transform-origin:0 50%;margin-left:-2px">Leer</span></div>
<div class="cell" style="left:2792.4px;top:256.64px;width:165px;height:102.24px"><div><div><span style="transform:scaleX(1.035);transform-origin:0 50%;margin-left:-1.5px">2022-12-11</span></div><div><span style="transform:scaleX(0.99);transform-origin:0 50%;margin-left:-1.5px">11:01:04</span></div></div></div>
<div class="cell c" style="left:2957.4px;top:256.64px;width:290.2px;height:102.24px"><span class="ico"><svg width="23" height="23" viewBox="0 0 23 23"><rect x="0" y="0" width="23" height="23" rx="4.5" fill="#0d88d8"/><path d="M5.2 16.2 L13.6 7.8" stroke="#fff" stroke-width="3.2" stroke-linecap="butt"/><path d="M9.6 4.4 H18.6 V13.4 Z" fill="#fff"/></svg></span></div>
<div class="a cb" style="left:16.1px;top:395.88px"></div>
<div class="cell" style="left:61.5px;top:358.88px;width:224.8px;height:102.24px"><span class="leer" style="transform:scaleX(0.947);transform-origin:0 50%;margin-left:-2px">Leer</span></div>
<div class="cell" style="left:286.3px;top:358.88px;width:306.3px;height:102.24px"><div><div><span style="transform:scaleX(1.015);transform-origin:0 50%">superadmin@calhelp.de</span></div></div></div>
<div class="cell" style="left:592.6px;top:358.88px;width:248.8px;height:102.24px"><div><div><span style="transform:scaleX(1.035);transform-origin:0 50%;margin-left:-2px">Super Admin</span></div></div></div>
<div class="cell c" style="left:841.4px;top:358.88px;width:201.1px;height:102.24px"><div><div><span>User</span></div></div></div>
<div class="cell c" style="left:1042.5px;top:358.88px;width:189.8px;height:102.24px"><div><div><span>0</span></div></div></div>
<div class="cell" style="left:1232.3px;top:358.88px;width:197px;height:102.24px"><span class="leer" style="transform:scaleX(0.947);transform-origin:0 50%;margin-left:-2px">Leer</span></div>
<div class="cell c" style="left:1429.3px;top:358.88px;width:204.1px;height:102.24px"><span class="leer" style="transform:scaleX(0.947);transform-origin:50% 50%">Leer</span></div>
<div class="cell" style="left:1633.4px;top:358.88px;width:225.1px;height:102.24px"><div><div><span style="margin-left:-1.8px"></span></div></div></div>
<div class="cell c" style="left:1858.5px;top:358.88px;width:324px;height:102.24px"><span class="leer" style="transform:scaleX(0.947);transform-origin:50% 50%">Leer</span></div>
<div class="cell c" style="left:2182.5px;top:358.88px;width:157px;height:102.24px"><span class="badge"><span style="transform:scaleX(0.94);transform-origin:50% 50%">Sent</span></span></div>
<div class="cell" style="left:2339.5px;top:358.88px;width:192.9px;height:102.24px"><div><div><span style="transform:scaleX(1.035);transform-origin:0 50%;margin-left:-1.5px">2022-10-16</span></div><div><span style="transform:scaleX(0.99);transform-origin:0 50%;margin-left:-1.5px">17:16:32</span></div></div></div>
<div class="cell" style="left:2532.4px;top:358.88px;width:260px;height:102.24px"><span class="leer" style="transform:scaleX(0.947);transform-origin:0 50%;margin-left:-2px">Leer</span></div>
<div class="cell" style="left:2792.4px;top:358.88px;width:165px;height:102.24px"><div><div><span style="transform:scaleX(1.035);transform-origin:0 50%;margin-left:-1.5px">2022-10-16</span></div><div><span style="transform:scaleX(0.99);transform-origin:0 50%;margin-left:-1.5px">17:14:03</span></div></div></div>
<div class="cell c" style="left:2957.4px;top:358.88px;width:290.2px;height:102.24px"><span class="ico"><svg width="23" height="23" viewBox="0 0 23 23"><rect x="0" y="0" width="23" height="23" rx="4.5" fill="#0d88d8"/><path d="M5.2 16.2 L13.6 7.8" stroke="#fff" stroke-width="3.2" stroke-linecap="butt"/><path d="M9.6 4.4 H18.6 V13.4 Z" fill="#fff"/></svg></span></div>
<div class="a cb" style="left:16.1px;top:498.12px"></div>
<div class="cell" style="left:61.5px;top:461.12px;width:224.8px;height:102.24px"><span class="leer" style="transform:scaleX(0.947);transform-origin:0 50%;margin-left:-2px">Leer</span></div>
<div class="cell" style="left:286.3px;top:461.12px;width:306.3px;height:102.24px"><div><div><span style="transform:scaleX(1.015);transform-origin:0 50%">superadmin@calhelp.de</span></div></div></div>
<div class="cell" style="left:592.6px;top:461.12px;width:248.8px;height:102.24px"><div><div><span style="transform:scaleX(1.035);transform-origin:0 50%;margin-left:-2px">Super Admin</span></div></div></div>
<div class="cell c" style="left:841.4px;top:461.12px;width:201.1px;height:102.24px"><div><div><span>User</span></div></div></div>
<div class="cell c" style="left:1042.5px;top:461.12px;width:189.8px;height:102.24px"><div><div><span>0</span></div></div></div>
<div class="cell" style="left:1232.3px;top:461.12px;width:197px;height:102.24px"><span class="leer" style="transform:scaleX(0.947);transform-origin:0 50%;margin-left:-2px">Leer</span></div>
<div class="cell c" style="left:1429.3px;top:461.12px;width:204.1px;height:102.24px"><span class="leer" style="transform:scaleX(0.947);transform-origin:50% 50%">Leer</span></div>
<div class="cell" style="left:1633.4px;top:461.12px;width:225.1px;height:102.24px"><div><div><span style="margin-left:-1.8px"></span></div></div></div>
<div class="cell c" style="left:1858.5px;top:461.12px;width:324px;height:102.24px"><span class="leer" style="transform:scaleX(0.947);transform-origin:50% 50%">Leer</span></div>
<div class="cell c" style="left:2182.5px;top:461.12px;width:157px;height:102.24px"><span class="badge"><span style="transform:scaleX(0.94);transform-origin:50% 50%">Sent</span></span></div>
<div class="cell" style="left:2339.5px;top:461.12px;width:192.9px;height:102.24px"><div><div><span style="transform:scaleX(1.035);transform-origin:0 50%;margin-left:-1.5px">2022-10-16</span></div><div><span style="transform:scaleX(0.99);transform-origin:0 50%;margin-left:-1.5px">17:15:32</span></div></div></div>
<div class="cell" style="left:2532.4px;top:461.12px;width:260px;height:102.24px"><span class="leer" style="transform:scaleX(0.947);transform-origin:0 50%;margin-left:-2px">Leer</span></div>
<div class="cell" style="left:2792.4px;top:461.12px;width:165px;height:102.24px"><div><div><span style="transform:scaleX(1.035);transform-origin:0 50%;margin-left:-1.5px">2022-10-16</span></div><div><span style="transform:scaleX(0.99);transform-origin:0 50%;margin-left:-1.5px">17:14:03</span></div></div></div>
<div class="cell c" style="left:2957.4px;top:461.12px;width:290.2px;height:102.24px"><span class="ico"><svg width="23" height="23" viewBox="0 0 23 23"><rect x="0" y="0" width="23" height="23" rx="4.5" fill="#0d88d8"/><path d="M5.2 16.2 L13.6 7.8" stroke="#fff" stroke-width="3.2" stroke-linecap="butt"/><path d="M9.6 4.4 H18.6 V13.4 Z" fill="#fff"/></svg></span></div>
<div class="a cb" style="left:16.1px;top:600.36px"></div>
<div class="cell" style="left:61.5px;top:563.36px;width:224.8px;height:102.24px"><div><div><span style="transform:scaleX(0.993);transform-origin:0 50%;margin-left:-2px">Excel Mailer</span></div></div></div>
<div class="cell" style="left:286.3px;top:563.36px;width:306.3px;height:102.24px"><div><div><span style="transform:scaleX(1.015);transform-origin:0 50%">superadmin@calhelp.de</span></div></div></div>
<div class="cell" style="left:592.6px;top:563.36px;width:248.8px;height:102.24px"><div><div><span style="transform:scaleX(1.035);transform-origin:0 50%;margin-left:-2px">Super Admin</span></div></div></div>
<div class="cell c" style="left:841.4px;top:563.36px;width:201.1px;height:102.24px"><div><div><span>User</span></div></div></div>
<div class="cell c" style="left:1042.5px;top:563.36px;width:189.8px;height:102.24px"><div><div><span>0</span></div></div></div>
<div class="cell" style="left:1232.3px;top:563.36px;width:197px;height:102.24px"><div><div><span>excel</span></div></div></div>
<div class="cell c" style="left:1429.3px;top:563.36px;width:204.1px;height:102.24px"><span class="leer" style="transform:scaleX(0.947);transform-origin:50% 50%">Leer</span></div>
<div class="cell" style="left:1633.4px;top:563.36px;width:225.1px;height:102.24px"><div><div><span style="margin-left:-2px">Link</span></div></div></div>
<div class="cell c" style="left:1858.5px;top:563.36px;width:324px;height:102.24px"><span class="leer" style="transform:scaleX(0.947);transform-origin:50% 50%">Leer</span></div>
<div class="cell c" style="left:2182.5px;top:563.36px;width:157px;height:102.24px"><span class="badge"><span style="transform:scaleX(0.94);transform-origin:50% 50%">Sent</span></span></div>
<div class="cell" style="left:2339.5px;top:563.36px;width:192.9px;height:102.24px"><div><div><span style="transform:scaleX(1.035);transform-origin:0 50%;margin-left:-1.5px">2022-06-28</span></div><div><span style="transform:scaleX(0.99);transform-origin:0 50%;margin-left:-1.5px">06:07:02</span></div></div></div>
<div class="cell" style="left:2532.4px;top:563.36px;width:260px;height:102.24px"><span class="leer" style="transform:scaleX(0.947);transform-origin:0 50%;margin-left:-2px">Leer</span></div>
<div class="cell" style="left:2792.4px;top:563.36px;width:165px;height:102.24px"><div><div><span style="transform:scaleX(1.035);transform-origin:0 50%;margin-left:-1.5px">2022-06-27</span></div><div><span style="transform:scaleX(0.99);transform-origin:0 50%;margin-left:-1.5px">10:44:15</span></div></div></div>
<div class="cell c" style="left:2957.4px;top:563.36px;width:290.2px;height:102.24px"><span class="ico"><svg width="23" height="23" viewBox="0 0 23 23"><rect x="0" y="0" width="23" height="23" rx="4.5" fill="#0d88d8"/><path d="M5.2 16.2 L13.6 7.8" stroke="#fff" stroke-width="3.2" stroke-linecap="butt"/><path d="M9.6 4.4 H18.6 V13.4 Z" fill="#fff"/></svg></span></div>
<div class="a cb" style="left:16.1px;top:702.6px"></div>
<div class="cell" style="left:61.5px;top:665.6px;width:224.8px;height:102.24px"><div><div><span style="transform:scaleX(0.993);transform-origin:0 50%;margin-left:-2px">Excel Mailer</span></div></div></div>
<div class="cell" style="left:286.3px;top:665.6px;width:306.3px;height:102.24px"><div><div><span style="transform:scaleX(1.031);transform-origin:0 50%">kunde-1@calhelp.de</span></div></div></div>
<div class="cell" style="left:592.6px;top:665.6px;width:248.8px;height:102.24px"><div><div><span style="transform:scaleX(0.948);transform-origin:0 50%;margin-left:-2px">S.C Kunde</span></div></div></div>
<div class="cell c" style="left:841.4px;top:665.6px;width:201.1px;height:102.24px"><div><div><span>User</span></div></div></div>
<div class="cell c" style="left:1042.5px;top:665.6px;width:189.8px;height:102.24px"><div><div><span>2</span></div></div></div>
<div class="cell" style="left:1232.3px;top:665.6px;width:197px;height:102.24px"><div><div><span>excel</span></div></div></div>
<div class="cell c" style="left:1429.3px;top:665.6px;width:204.1px;height:102.24px"><span class="leer" style="transform:scaleX(0.947);transform-origin:50% 50%">Leer</span></div>
<div class="cell" style="left:1633.4px;top:665.6px;width:225.1px;height:102.24px"><div><div><span style="margin-left:-2px">Link</span></div></div></div>
<div class="cell c" style="left:1858.5px;top:665.6px;width:324px;height:102.24px"><span class="leer" style="transform:scaleX(0.947);transform-origin:50% 50%">Leer</span></div>
<div class="cell c" style="left:2182.5px;top:665.6px;width:157px;height:102.24px"><span class="badge"><span style="transform:scaleX(0.94);transform-origin:50% 50%">Sent</span></span></div>
<div class="cell" style="left:2339.5px;top:665.6px;width:192.9px;height:102.24px"><div><div><span style="transform:scaleX(1.035);transform-origin:0 50%;margin-left:-1.5px">2022-06-28</span></div><div><span style="transform:scaleX(0.99);transform-origin:0 50%;margin-left:-1.5px">06:07:02</span></div></div></div>
<div class="cell" style="left:2532.4px;top:665.6px;width:260px;height:102.24px"><span class="leer" style="transform:scaleX(0.947);transform-origin:0 50%;margin-left:-2px">Leer</span></div>
<div class="cell" style="left:2792.4px;top:665.6px;width:165px;height:102.24px"><div><div><span style="transform:scaleX(1.035);transform-origin:0 50%;margin-left:-1.5px">2022-06-27</span></div><div><span style="transform:scaleX(0.99);transform-origin:0 50%;margin-left:-1.5px">10:44:15</span></div></div></div>
<div class="cell c" style="left:2957.4px;top:665.6px;width:290.2px;height:102.24px"><span class="ico"><svg width="23" height="23" viewBox="0 0 23 23"><rect x="0" y="0" width="23" height="23" rx="4.5" fill="#0d88d8"/><path d="M5.2 16.2 L13.6 7.8" stroke="#fff" stroke-width="3.2" stroke-linecap="butt"/><path d="M9.6 4.4 H18.6 V13.4 Z" fill="#fff"/></svg></span></div>
<div class="a cb" style="left:16.1px;top:804.84px"></div>
<div class="cell" style="left:61.5px;top:767.84px;width:224.8px;height:102.24px"><div><div><span style="transform:scaleX(0.993);transform-origin:0 50%;margin-left:-2px">Excel Mailer</span></div></div></div>
<div class="cell" style="left:286.3px;top:767.84px;width:306.3px;height:102.24px"><div><div><span style="transform:scaleX(1.017);transform-origin:0 50%">admin@calhelp.de</span></div></div></div>
<div class="cell" style="left:592.6px;top:767.84px;width:248.8px;height:102.24px"><div><div><span style="transform:scaleX(0.948);transform-origin:0 50%;margin-left:-2px">S.C Kunde</span></div></div></div>
<div class="cell c" style="left:841.4px;top:767.84px;width:201.1px;height:102.24px"><div><div><span>User</span></div></div></div>
<div class="cell c" style="left:1042.5px;top:767.84px;width:189.8px;height:102.24px"><div><div><span>2</span></div></div></div>
<div class="cell" style="left:1232.3px;top:767.84px;width:197px;height:102.24px"><div><div><span>excel</span></div></div></div>
<div class="cell c" style="left:1429.3px;top:767.84px;width:204.1px;height:102.24px"><span class="leer" style="transform:scaleX(0.947);transform-origin:50% 50%">Leer</span></div>
<div class="cell" style="left:1633.4px;top:767.84px;width:225.1px;height:102.24px"><div><div><span style="margin-left:-2px">Link</span></div></div></div>
<div class="cell c" style="left:1858.5px;top:767.84px;width:324px;height:102.24px"><span class="leer" style="transform:scaleX(0.947);transform-origin:50% 50%">Leer</span></div>
<div class="cell c" style="left:2182.5px;top:767.84px;width:157px;height:102.24px"><span class="badge"><span style="transform:scaleX(0.94);transform-origin:50% 50%">Sent</span></span></div>
<div class="cell" style="left:2339.5px;top:767.84px;width:192.9px;height:102.24px"><div><div><span style="transform:scaleX(1.035);transform-origin:0 50%;margin-left:-1.5px">2022-06-28</span></div><div><span style="transform:scaleX(0.99);transform-origin:0 50%;margin-left:-1.5px">06:07:03</span></div></div></div>
<div class="cell" style="left:2532.4px;top:767.84px;width:260px;height:102.24px"><span class="leer" style="transform:scaleX(0.947);transform-origin:0 50%;margin-left:-2px">Leer</span></div>
<div class="cell" style="left:2792.4px;top:767.84px;width:165px;height:102.24px"><div><div><span style="transform:scaleX(1.035);transform-origin:0 50%;margin-left:-1.5px">2022-06-27</span></div><div><span style="transform:scaleX(0.99);transform-origin:0 50%;margin-left:-1.5px">10:44:10</span></div></div></div>
<div class="cell c" style="left:2957.4px;top:767.84px;width:290.2px;height:102.24px"><span class="ico"><svg width="23" height="23" viewBox="0 0 23 23"><rect x="0" y="0" width="23" height="23" rx="4.5" fill="#0d88d8"/><path d="M5.2 16.2 L13.6 7.8" stroke="#fff" stroke-width="3.2" stroke-linecap="butt"/><path d="M9.6 4.4 H18.6 V13.4 Z" fill="#fff"/></svg></span></div>
<div class="a cb" style="left:16.1px;top:907.08px"></div>
<div class="cell" style="left:61.5px;top:870.08px;width:224.8px;height:102.24px"><div><div><span style="transform:scaleX(0.993);transform-origin:0 50%;margin-left:-2px">Excel Mailer</span></div></div></div>
<div class="cell" style="left:286.3px;top:870.08px;width:306.3px;height:102.24px"><div><div><span style="transform:scaleX(1.017);transform-origin:0 50%">admin@calhelp.de</span></div></div></div>
<div class="cell" style="left:592.6px;top:870.08px;width:248.8px;height:102.24px"><div><div><span style="transform:scaleX(1.035);transform-origin:0 50%;margin-left:-2px">Super Admin</span></div></div></div>
<div class="cell c" style="left:841.4px;top:870.08px;width:201.1px;height:102.24px"><div><div><span>User</span></div></div></div>
<div class="cell c" style="left:1042.5px;top:870.08px;width:189.8px;height:102.24px"><div><div><span>0</span></div></div></div>
<div class="cell" style="left:1232.3px;top:870.08px;width:197px;height:102.24px"><div><div><span>excel</span></div></div></div>
<div class="cell c" style="left:1429.3px;top:870.08px;width:204.1px;height:102.24px"><span class="leer" style="transform:scaleX(0.947);transform-origin:50% 50%">Leer</span></div>
<div class="cell" style="left:1633.4px;top:870.08px;width:225.1px;height:102.24px"><div><div><span style="margin-left:-2px">Link</span></div></div></div>
<div class="cell c" style="left:1858.5px;top:870.08px;width:324px;height:102.24px"><span class="leer" style="transform:scaleX(0.947);transform-origin:50% 50%">Leer</span></div>
<div class="cell c" style="left:2182.5px;top:870.08px;width:157px;height:102.24px"><span class="badge"><span style="transform:scaleX(0.94);transform-origin:50% 50%">Sent</span></span></div>
<div class="cell" style="left:2339.5px;top:870.08px;width:192.9px;height:102.24px"><div><div><span style="transform:scaleX(1.035);transform-origin:0 50%;margin-left:-1.5px">2022-06-28</span></div><div><span style="transform:scaleX(0.99);transform-origin:0 50%;margin-left:-1.5px">06:07:02</span></div></div></div>
<div class="cell" style="left:2532.4px;top:870.08px;width:260px;height:102.24px"><span class="leer" style="transform:scaleX(0.947);transform-origin:0 50%;margin-left:-2px">Leer</span></div>
<div class="cell" style="left:2792.4px;top:870.08px;width:165px;height:102.24px"><div><div><span style="transform:scaleX(1.035);transform-origin:0 50%;margin-left:-1.5px">2022-06-27</span></div><div><span style="transform:scaleX(0.99);transform-origin:0 50%;margin-left:-1.5px">10:44:10</span></div></div></div>
<div class="cell c" style="left:2957.4px;top:870.08px;width:290.2px;height:102.24px"><span class="ico"><svg width="23" height="23" viewBox="0 0 23 23"><rect x="0" y="0" width="23" height="23" rx="4.5" fill="#0d88d8"/><path d="M5.2 16.2 L13.6 7.8" stroke="#fff" stroke-width="3.2" stroke-linecap="butt"/><path d="M9.6 4.4 H18.6 V13.4 Z" fill="#fff"/></svg></span></div>
<div class="a cb" style="left:16.1px;top:1009.32px"></div>
<div class="cell" style="left:61.5px;top:972.32px;width:224.8px;height:102.24px"><div><div><span style="transform:scaleX(0.993);transform-origin:0 50%;margin-left:-2px">Excel Mailer</span></div></div></div>
<div class="cell" style="left:286.3px;top:972.32px;width:306.3px;height:102.24px"><div><div><span style="transform:scaleX(1.017);transform-origin:0 50%">admin@calhelp.de</span></div></div></div>
<div class="cell" style="left:592.6px;top:972.32px;width:248.8px;height:102.24px"><div><div><span style="transform:scaleX(0.948);transform-origin:0 50%;margin-left:-2px">S.C Kunde</span></div></div></div>
<div class="cell c" style="left:841.4px;top:972.32px;width:201.1px;height:102.24px"><div><div><span>User</span></div></div></div>
<div class="cell c" style="left:1042.5px;top:972.32px;width:189.8px;height:102.24px"><div><div><span>2</span></div></div></div>
<div class="cell" style="left:1232.3px;top:972.32px;width:197px;height:102.24px"><div><div><span>excel</span></div></div></div>
<div class="cell c" style="left:1429.3px;top:972.32px;width:204.1px;height:102.24px"><span class="leer" style="transform:scaleX(0.947);transform-origin:50% 50%">Leer</span></div>
<div class="cell" style="left:1633.4px;top:972.32px;width:225.1px;height:102.24px"><div><div><span style="margin-left:-2px">Link</span></div></div></div>
<div class="cell c" style="left:1858.5px;top:972.32px;width:324px;height:102.24px"><span class="leer" style="transform:scaleX(0.947);transform-origin:50% 50%">Leer</span></div>
<div class="cell c" style="left:2182.5px;top:972.32px;width:157px;height:102.24px"><span class="badge"><span style="transform:scaleX(0.94);transform-origin:50% 50%">Sent</span></span></div>
<div class="cell" style="left:2339.5px;top:972.32px;width:192.9px;height:102.24px"><div><div><span style="transform:scaleX(1.035);transform-origin:0 50%;margin-left:-1.5px">2022-06-28</span></div><div><span style="transform:scaleX(0.99);transform-origin:0 50%;margin-left:-1.5px">06:07:08</span></div></div></div>
<div class="cell" style="left:2532.4px;top:972.32px;width:260px;height:102.24px"><span class="leer" style="transform:scaleX(0.947);transform-origin:0 50%;margin-left:-2px">Leer</span></div>
<div class="cell" style="left:2792.4px;top:972.32px;width:165px;height:102.24px"><div><div><span style="transform:scaleX(1.035);transform-origin:0 50%;margin-left:-1.5px">2022-06-27</span></div><div><span style="transform:scaleX(0.99);transform-origin:0 50%;margin-left:-1.5px">10:42:55</span></div></div></div>
<div class="cell c" style="left:2957.4px;top:972.32px;width:290.2px;height:102.24px"><span class="ico"><svg width="23" height="23" viewBox="0 0 23 23"><rect x="0" y="0" width="23" height="23" rx="4.5" fill="#0d88d8"/><path d="M5.2 16.2 L13.6 7.8" stroke="#fff" stroke-width="3.2" stroke-linecap="butt"/><path d="M9.6 4.4 H18.6 V13.4 Z" fill="#fff"/></svg></span></div>
<div class="a cb" style="left:16.1px;top:1111.56px"></div>
<div class="cell" style="left:61.5px;top:1074.56px;width:224.8px;height:102.24px"><div><div><span style="transform:scaleX(0.993);transform-origin:0 50%;margin-left:-2px">Excel Mailer</span></div></div></div>
<div class="cell" style="left:286.3px;top:1074.56px;width:306.3px;height:102.24px"><div><div><span style="transform:scaleX(1.017);transform-origin:0 50%">admin@calhelp.de</span></div></div></div>
<div class="cell" style="left:592.6px;top:1074.56px;width:248.8px;height:102.24px"><div><div><span style="transform:scaleX(1.035);transform-origin:0 50%;margin-left:-2px">Super Admin</span></div></div></div>
<div class="cell c" style="left:841.4px;top:1074.56px;width:201.1px;height:102.24px"><div><div><span>User</span></div></div></div>
<div class="cell c" style="left:1042.5px;top:1074.56px;width:189.8px;height:102.24px"><div><div><span>0</span></div></div></div>
<div class="cell" style="left:1232.3px;top:1074.56px;width:197px;height:102.24px"><div><div><span>excel</span></div></div></div>
<div class="cell c" style="left:1429.3px;top:1074.56px;width:204.1px;height:102.24px"><span class="leer" style="transform:scaleX(0.947);transform-origin:50% 50%">Leer</span></div>
<div class="cell" style="left:1633.4px;top:1074.56px;width:225.1px;height:102.24px"><div><div><span style="margin-left:-2px">Link</span></div></div></div>
<div class="cell c" style="left:1858.5px;top:1074.56px;width:324px;height:102.24px"><span class="leer" style="transform:scaleX(0.947);transform-origin:50% 50%">Leer</span></div>
<div class="cell c" style="left:2182.5px;top:1074.56px;width:157px;height:102.24px"><span class="badge"><span style="transform:scaleX(0.94);transform-origin:50% 50%">Sent</span></span></div>
<div class="cell" style="left:2339.5px;top:1074.56px;width:192.9px;height:102.24px"><div><div><span style="transform:scaleX(1.035);transform-origin:0 50%;margin-left:-1.5px">2022-06-28</span></div><div><span style="transform:scaleX(0.99);transform-origin:0 50%;margin-left:-1.5px">06:07:08</span></div></div></div>
<div class="cell" style="left:2532.4px;top:1074.56px;width:260px;height:102.24px"><span class="leer" style="transform:scaleX(0.947);transform-origin:0 50%;margin-left:-2px">Leer</span></div>
<div class="cell" style="left:2792.4px;top:1074.56px;width:165px;height:102.24px"><div><div><span style="transform:scaleX(1.035);transform-origin:0 50%;margin-left:-1.5px">2022-06-27</span></div><div><span style="transform:scaleX(0.99);transform-origin:0 50%;margin-left:-1.5px">10:42:55</span></div></div></div>
<div class="cell c" style="left:2957.4px;top:1074.56px;width:290.2px;height:102.24px"><span class="ico"><svg width="23" height="23" viewBox="0 0 23 23"><rect x="0" y="0" width="23" height="23" rx="4.5" fill="#0d88d8"/><path d="M5.2 16.2 L13.6 7.8" stroke="#fff" stroke-width="3.2" stroke-linecap="butt"/><path d="M9.6 4.4 H18.6 V13.4 Z" fill="#fff"/></svg></span></div>
<div class="a cb" style="left:16.1px;top:1213.8px"></div>
<div class="cell" style="left:61.5px;top:1176.8px;width:224.8px;height:102.24px"><div><div><span style="transform:scaleX(0.993);transform-origin:0 50%;margin-left:-2px">Excel Mailer</span></div></div></div>
<div class="cell" style="left:286.3px;top:1176.8px;width:306.3px;height:102.24px"><div><div><span style="transform:scaleX(1.015);transform-origin:0 50%">superadmin@calhelp.de</span></div></div></div>
<div class="cell" style="left:592.6px;top:1176.8px;width:248.8px;height:102.24px"><div><div><span style="transform:scaleX(1.035);transform-origin:0 50%;margin-left:-2px">Super Admin</span></div></div></div>
<div class="cell c" style="left:841.4px;top:1176.8px;width:201.1px;height:102.24px"><div><div><span>User</span></div></div></div>
<div class="cell c" style="left:1042.5px;top:1176.8px;width:189.8px;height:102.24px"><div><div><span>0</span></div></div></div>
<div class="cell" style="left:1232.3px;top:1176.8px;width:197px;height:102.24px"><div><div><span>excel</span></div></div></div>
<div class="cell c" style="left:1429.3px;top:1176.8px;width:204.1px;height:102.24px"><span class="leer" style="transform:scaleX(0.947);transform-origin:50% 50%">Leer</span></div>
<div class="cell" style="left:1633.4px;top:1176.8px;width:225.1px;height:102.24px"><div><div><span style="margin-left:-2px">Link</span></div></div></div>
<div class="cell c" style="left:1858.5px;top:1176.8px;width:324px;height:102.24px"><span class="leer" style="transform:scaleX(0.947);transform-origin:50% 50%">Leer</span></div>
<div class="cell c" style="left:2182.5px;top:1176.8px;width:157px;height:102.24px"><span class="badge"><span style="transform:scaleX(0.94);transform-origin:50% 50%">Sent</span></span></div>
<div class="cell" style="left:2339.5px;top:1176.8px;width:192.9px;height:102.24px"><div><div><span style="transform:scaleX(1.035);transform-origin:0 50%;margin-left:-1.5px">2022-06-28</span></div><div><span style="transform:scaleX(0.99);transform-origin:0 50%;margin-left:-1.5px">06:07:13</span></div></div></div>
<div class="cell" style="left:2532.4px;top:1176.8px;width:260px;height:102.24px"><span class="leer" style="transform:scaleX(0.947);transform-origin:0 50%;margin-left:-2px">Leer</span></div>
<div class="cell" style="left:2792.4px;top:1176.8px;width:165px;height:102.24px"><div><div><span style="transform:scaleX(1.035);transform-origin:0 50%;margin-left:-1.5px">2022-06-27</span></div><div><span style="transform:scaleX(0.99);transform-origin:0 50%;margin-left:-1.5px">10:42:49</span></div></div></div>
<div class="cell c" style="left:2957.4px;top:1176.8px;width:290.2px;height:102.24px"><span class="ico"><svg width="23" height="23" viewBox="0 0 23 23"><rect x="0" y="0" width="23" height="23" rx="4.5" fill="#0d88d8"/><path d="M5.2 16.2 L13.6 7.8" stroke="#fff" stroke-width="3.2" stroke-linecap="butt"/><path d="M9.6 4.4 H18.6 V13.4 Z" fill="#fff"/></svg></span></div>
<div class="a cb" style="left:16.1px;top:1316.04px"></div>
<div class="cell" style="left:61.5px;top:1279.04px;width:224.8px;height:102.24px"><div><div><span style="transform:scaleX(0.993);transform-origin:0 50%;margin-left:-2px">Excel Mailer</span></div></div></div>
<div class="cell" style="left:286.3px;top:1279.04px;width:306.3px;height:102.24px"><div><div><span style="transform:scaleX(1.031);transform-origin:0 50%">kunde-1@calhelp.de</span></div></div></div>
<div class="cell" style="left:592.6px;top:1279.04px;width:248.8px;height:102.24px"><div><div><span style="transform:scaleX(0.948);transform-origin:0 50%;margin-left:-2px">S.C Kunde</span></div></div></div>
<div class="cell c" style="left:841.4px;top:1279.04px;width:201.1px;height:102.24px"><div><div><span>User</span></div></div></div>
<div class="cell c" style="left:1042.5px;top:1279.04px;width:189.8px;height:102.24px"><div><div><span>2</span></div></div></div>
<div class="cell" style="left:1232.3px;top:1279.04px;width:197px;height:102.24px"><div><div><span>excel</span></div></div></div>
<div class="cell c" style="left:1429.3px;top:1279.04px;width:204.1px;height:102.24px"><span class="leer" style="transform:scaleX(0.947);transform-origin:50% 50%">Leer</span></div>
<div class="cell" style="left:1633.4px;top:1279.04px;width:225.1px;height:102.24px"><div><div><span style="margin-left:-2px">Link</span></div></div></div>
<div class="cell c" style="left:1858.5px;top:1279.04px;width:324px;height:102.24px"><span class="leer" style="transform:scaleX(0.947);transform-origin:50% 50%">Leer</span></div>
<div class="cell c" style="left:2182.5px;top:1279.04px;width:157px;height:102.24px"><span class="badge"><span style="transform:scaleX(0.94);transform-origin:50% 50%">Sent</span></span></div>
<div class="cell" style="left:2339.5px;top:1279.04px;width:192.9px;height:102.24px"><div><div><span style="transform:scaleX(1.035);transform-origin:0 50%;margin-left:-1.5px">2022-06-28</span></div><div><span style="transform:scaleX(0.99);transform-origin:0 50%;margin-left:-1.5px">06:07:08</span></div></div></div>
<div class="cell" style="left:2532.4px;top:1279.04px;width:260px;height:102.24px"><span class="leer" style="transform:scaleX(0.947);transform-origin:0 50%;margin-left:-2px">Leer</span></div>
<div class="cell" style="left:2792.4px;top:1279.04px;width:165px;height:102.24px"><div><div><span style="transform:scaleX(1.035);transform-origin:0 50%;margin-left:-1.5px">2022-06-27</span></div><div><span style="transform:scaleX(0.99);transform-origin:0 50%;margin-left:-1.5px">10:42:49</span></div></div></div>
<div class="cell c" style="left:2957.4px;top:1279.04px;width:290.2px;height:102.24px"><span class="ico"><svg width="23" height="23" viewBox="0 0 23 23"><rect x="0" y="0" width="23" height="23" rx="4.5" fill="#0d88d8"/><path d="M5.2 16.2 L13.6 7.8" stroke="#fff" stroke-width="3.2" stroke-linecap="butt"/><path d="M9.6 4.4 H18.6 V13.4 Z" fill="#fff"/></svg></span></div>
<div class="a cb" style="left:16.1px;top:1418.28px"></div>
<div class="cell" style="left:61.5px;top:1381.28px;width:224.8px;height:102.24px"><div><div><span style="transform:scaleX(0.993);transform-origin:0 50%;margin-left:-2px">Excel Mailer</span></div></div></div>
<div class="cell" style="left:286.3px;top:1381.28px;width:306.3px;height:102.24px"><div><div><span style="transform:scaleX(1.017);transform-origin:0 50%">admin@calhelp.de</span></div></div></div>
<div class="cell" style="left:592.6px;top:1381.28px;width:248.8px;height:102.24px"><div><div><span style="transform:scaleX(0.948);transform-origin:0 50%;margin-left:-2px">S.C Kunde</span></div></div></div>
<div class="cell c" style="left:841.4px;top:1381.28px;width:201.1px;height:102.24px"><div><div><span>User</span></div></div></div>
<div class="cell c" style="left:1042.5px;top:1381.28px;width:189.8px;height:102.24px"><div><div><span>2</span></div></div></div>
<div class="cell" style="left:1232.3px;top:1381.28px;width:197px;height:102.24px"><div><div><span>excel</span></div></div></div>
<div class="cell c" style="left:1429.3px;top:1381.28px;width:204.1px;height:102.24px"><span class="leer" style="transform:scaleX(0.947);transform-origin:50% 50%">Leer</span></div>
<div class="cell" style="left:1633.4px;top:1381.28px;width:225.1px;height:102.24px"><div><div><span style="margin-left:-2px">Link</span></div></div></div>
<div class="cell c" style="left:1858.5px;top:1381.28px;width:324px;height:102.24px"><span class="leer" style="transform:scaleX(0.947);transform-origin:50% 50%">Leer</span></div>
<div class="cell c" style="left:2182.5px;top:1381.28px;width:157px;height:102.24px"><span class="badge"><span style="transform:scaleX(0.94);transform-origin:50% 50%">Sent</span></span></div>
<div class="cell" style="left:2339.5px;top:1381.28px;width:192.9px;height:102.24px"><div><div><span style="transform:scaleX(1.035);transform-origin:0 50%;margin-left:-1.5px">2022-06-28</span></div><div><span style="transform:scaleX(0.99);transform-origin:0 50%;margin-left:-1.5px">06:08:02</span></div></div></div>
<div class="cell" style="left:2532.4px;top:1381.28px;width:260px;height:102.24px"><span class="leer" style="transform:scaleX(0.947);transform-origin:0 50%;margin-left:-2px">Leer</span></div>
<div class="cell" style="left:2792.4px;top:1381.28px;width:165px;height:102.24px"><div><div><span style="transform:scaleX(1.035);transform-origin:0 50%;margin-left:-1.5px">2022-06-27</span></div><div><span style="transform:scaleX(0.99);transform-origin:0 50%;margin-left:-1.5px">10:28:45</span></div></div></div>
<div class="cell c" style="left:2957.4px;top:1381.28px;width:290.2px;height:102.24px"><span class="ico"><svg width="23" height="23" viewBox="0 0 23 23"><rect x="0" y="0" width="23" height="23" rx="4.5" fill="#0d88d8"/><path d="M5.2 16.2 L13.6 7.8" stroke="#fff" stroke-width="3.2" stroke-linecap="butt"/><path d="M9.6 4.4 H18.6 V13.4 Z" fill="#fff"/></svg></span></div>
<div class="a cb" style="left:16.1px;top:1520.52px"></div>
<div class="cell" style="left:61.5px;top:1483.52px;width:224.8px;height:102.24px"><div><div><span style="transform:scaleX(0.993);transform-origin:0 50%;margin-left:-2px">Excel Mailer</span></div></div></div>
<div class="cell" style="left:286.3px;top:1483.52px;width:306.3px;height:102.24px"><div><div><span style="transform:scaleX(1.017);transform-origin:0 50%">admin@calhelp.de</span></div></div></div>
<div class="cell" style="left:592.6px;top:1483.52px;width:248.8px;height:102.24px"><div><div><span style="transform:scaleX(1.041);transform-origin:0 50%;margin-left:-2px">Max Mustermann</span></div></div></div>
<div class="cell c" style="left:841.4px;top:1483.52px;width:201.1px;height:102.24px"><div><div><span>User</span></div></div></div>
<div class="cell c" style="left:1042.5px;top:1483.52px;width:189.8px;height:102.24px"><div><div><span>1</span></div></div></div>
<div class="cell" style="left:1232.3px;top:1483.52px;width:197px;height:102.24px"><div><div><span>excel</span></div></div></div>
<div class="cell c" style="left:1429.3px;top:1483.52px;width:204.1px;height:102.24px"><span class="leer" style="transform:scaleX(0.947);transform-origin:50% 50%">Leer</span></div>
<div class="cell" style="left:1633.4px;top:1483.52px;width:225.1px;height:102.24px"><div><div><span style="margin-left:-2px">Link</span></div></div></div>
<div class="cell c" style="left:1858.5px;top:1483.52px;width:324px;height:102.24px"><span class="leer" style="transform:scaleX(0.947);transform-origin:50% 50%">Leer</span></div>
<div class="cell c" style="left:2182.5px;top:1483.52px;width:157px;height:102.24px"><span class="badge"><span style="transform:scaleX(0.94);transform-origin:50% 50%">Sent</span></span></div>
<div class="cell" style="left:2339.5px;top:1483.52px;width:192.9px;height:102.24px"><div><div><span style="transform:scaleX(1.035);transform-origin:0 50%;margin-left:-1.5px">2022-06-28</span></div><div><span style="transform:scaleX(0.99);transform-origin:0 50%;margin-left:-1.5px">06:08:02</span></div></div></div>
<div class="cell" style="left:2532.4px;top:1483.52px;width:260px;height:102.24px"><span class="leer" style="transform:scaleX(0.947);transform-origin:0 50%;margin-left:-2px">Leer</span></div>
<div class="cell" style="left:2792.4px;top:1483.52px;width:165px;height:102.24px"><div><div><span style="transform:scaleX(1.035);transform-origin:0 50%;margin-left:-1.5px">2022-06-27</span></div><div><span style="transform:scaleX(0.99);transform-origin:0 50%;margin-left:-1.5px">10:28:45</span></div></div></div>
<div class="cell c" style="left:2957.4px;top:1483.52px;width:290.2px;height:102.24px"><span class="ico"><svg width="23" height="23" viewBox="0 0 23 23"><rect x="0" y="0" width="23" height="23" rx="4.5" fill="#0d88d8"/><path d="M5.2 16.2 L13.6 7.8" stroke="#fff" stroke-width="3.2" stroke-linecap="butt"/><path d="M9.6 4.4 H18.6 V13.4 Z" fill="#fff"/></svg></span></div>
<div class="a cb" style="left:16.1px;top:1622.76px"></div>
<div class="cell" style="left:61.5px;top:1585.76px;width:224.8px;height:102.24px"><div><div><span style="transform:scaleX(0.993);transform-origin:0 50%;margin-left:-2px">Excel Mailer</span></div></div></div>
<div class="cell" style="left:286.3px;top:1585.76px;width:306.3px;height:102.24px"><div><div><span style="transform:scaleX(1.017);transform-origin:0 50%">admin@calhelp.de</span></div></div></div>
<div class="cell" style="left:592.6px;top:1585.76px;width:248.8px;height:102.24px"><div><div><span style="margin-left:-2px">Data Entry</span></div></div></div>
<div class="cell c" style="left:841.4px;top:1585.76px;width:201.1px;height:102.24px"><div><div><span>User</span></div></div></div>
<div class="cell c" style="left:1042.5px;top:1585.76px;width:189.8px;height:102.24px"><div><div><span>0</span></div></div></div>
<div class="cell" style="left:1232.3px;top:1585.76px;width:197px;height:102.24px"><div><div><span>excel</span></div></div></div>
<div class="cell c" style="left:1429.3px;top:1585.76px;width:204.1px;height:102.24px"><span class="leer" style="transform:scaleX(0.947);transform-origin:50% 50%">Leer</span></div>
<div class="cell" style="left:1633.4px;top:1585.76px;width:225.1px;height:102.24px"><div><div><span style="margin-left:-2px">Link</span></div></div></div>
<div class="cell c" style="left:1858.5px;top:1585.76px;width:324px;height:102.24px"><span class="leer" style="transform:scaleX(0.947);transform-origin:50% 50%">Leer</span></div>
<div class="cell c" style="left:2182.5px;top:1585.76px;width:157px;height:102.24px"><span class="badge"><span style="transform:scaleX(0.94);transform-origin:50% 50%">Sent</span></span></div>
<div class="cell" style="left:2339.5px;top:1585.76px;width:192.9px;height:102.24px"><div><div><span style="transform:scaleX(1.035);transform-origin:0 50%;margin-left:-1.5px">2022-06-28</span></div><div><span style="transform:scaleX(0.99);transform-origin:0 50%;margin-left:-1.5px">06:08:02</span></div></div></div>
<div class="cell" style="left:2532.4px;top:1585.76px;width:260px;height:102.24px"><span class="leer" style="transform:scaleX(0.947);transform-origin:0 50%;margin-left:-2px">Leer</span></div>
<div class="cell" style="left:2792.4px;top:1585.76px;width:165px;height:102.24px"><div><div><span style="transform:scaleX(1.035);transform-origin:0 50%;margin-left:-1.5px">2022-06-27</span></div><div><span style="transform:scaleX(0.99);transform-origin:0 50%;margin-left:-1.5px">10:28:45</span></div></div></div>
<div class="cell c" style="left:2957.4px;top:1585.76px;width:290.2px;height:102.24px"><span class="ico"><svg width="23" height="23" viewBox="0 0 23 23"><rect x="0" y="0" width="23" height="23" rx="4.5" fill="#0d88d8"/><path d="M5.2 16.2 L13.6 7.8" stroke="#fff" stroke-width="3.2" stroke-linecap="butt"/><path d="M9.6 4.4 H18.6 V13.4 Z" fill="#fff"/></svg></span></div>
<div class="a cb" style="left:16.1px;top:1725px"></div>
<div class="cell" style="left:61.5px;top:1688px;width:224.8px;height:102.24px"><div><div><span style="transform:scaleX(0.993);transform-origin:0 50%;margin-left:-2px">Excel Mailer</span></div></div></div>
<div class="cell" style="left:286.3px;top:1688px;width:306.3px;height:102.24px"><div><div><span style="transform:scaleX(1.017);transform-origin:0 50%">admin@calhelp.de</span></div></div></div>
<div class="cell" style="left:592.6px;top:1688px;width:248.8px;height:102.24px"><div><div><span style="transform:scaleX(1.014);transform-origin:0 50%;margin-left:-1.3px">Albert Einstein</span></div></div></div>
<div class="cell c" style="left:841.4px;top:1688px;width:201.1px;height:102.24px"><div><div><span>User</span></div></div></div>
<div class="cell c" style="left:1042.5px;top:1688px;width:189.8px;height:102.24px"><div><div><span>3</span></div></div></div>
<div class="cell" style="left:1232.3px;top:1688px;width:197px;height:102.24px"><div><div><span>excel</span></div></div></div>
<div class="cell c" style="left:1429.3px;top:1688px;width:204.1px;height:102.24px"><span class="leer" style="transform:scaleX(0.947);transform-origin:50% 50%">Leer</span></div>
<div class="cell" style="left:1633.4px;top:1688px;width:225.1px;height:102.24px"><div><div><span style="margin-left:-2px">Link</span></div></div></div>
<div class="cell c" style="left:1858.5px;top:1688px;width:324px;height:102.24px"><span class="leer" style="transform:scaleX(0.947);transform-origin:50% 50%">Leer</span></div>
<div class="cell c" style="left:2182.5px;top:1688px;width:157px;height:102.24px"><span class="badge"><span style="transform:scaleX(0.94);transform-origin:50% 50%">Sent</span></span></div>
<div class="cell" style="left:2339.5px;top:1688px;width:192.9px;height:102.24px"><div><div><span style="transform:scaleX(1.035);transform-origin:0 50%;margin-left:-1.5px">2022-06-28</span></div><div><span style="transform:scaleX(0.99);transform-origin:0 50%;margin-left:-1.5px">06:08:02</span></div></div></div>
<div class="cell" style="left:2532.4px;top:1688px;width:260px;height:102.24px"><span class="leer" style="transform:scaleX(0.947);transform-origin:0 50%;margin-left:-2px">Leer</span></div>
<div class="cell" style="left:2792.4px;top:1688px;width:165px;height:102.24px"><div><div><span style="transform:scaleX(1.035);transform-origin:0 50%;margin-left:-1.5px">2022-06-27</span></div><div><span style="transform:scaleX(0.99);transform-origin:0 50%;margin-left:-1.5px">10:28:45</span></div></div></div>
<div class="cell c" style="left:2957.4px;top:1688px;width:290.2px;height:102.24px"><span class="ico"><svg width="23" height="23" viewBox="0 0 23 23"><rect x="0" y="0" width="23" height="23" rx="4.5" fill="#0d88d8"/><path d="M5.2 16.2 L13.6 7.8" stroke="#fff" stroke-width="3.2" stroke-linecap="butt"/><path d="M9.6 4.4 H18.6 V13.4 Z" fill="#fff"/></svg></span></div>
<div class="a cb" style="left:16.1px;top:1827.24px"></div>
<div class="cell" style="left:61.5px;top:1790.24px;width:224.8px;height:102.24px"><div><div><span style="transform:scaleX(0.993);transform-origin:0 50%;margin-left:-2px">Excel Mailer</span></div></div></div>
<div class="cell" style="left:286.3px;top:1790.24px;width:306.3px;height:102.24px"><div><div><span style="transform:scaleX(1.017);transform-origin:0 50%">admin@calhelp.de</span></div></div></div>
<div class="cell" style="left:592.6px;top:1790.24px;width:248.8px;height:102.24px"><div><div><span style="transform:scaleX(1.047);transform-origin:0 50%;margin-left:-2px">Mein Demo</span></div></div></div>
<div class="cell c" style="left:841.4px;top:1790.24px;width:201.1px;height:102.24px"><div><div><span>User</span></div></div></div>
<div class="cell c" style="left:1042.5px;top:1790.24px;width:189.8px;height:102.24px"><div><div><span>1</span></div></div></div>
<div class="cell" style="left:1232.3px;top:1790.24px;width:197px;height:102.24px"><div><div><span>excel</span></div></div></div>
<div class="cell c" style="left:1429.3px;top:1790.24px;width:204.1px;height:102.24px"><span class="leer" style="transform:scaleX(0.947);transform-origin:50% 50%">Leer</span></div>
<div class="cell" style="left:1633.4px;top:1790.24px;width:225.1px;height:102.24px"><div><div><span style="margin-left:-2px">Link</span></div></div></div>
<div class="cell c" style="left:1858.5px;top:1790.24px;width:324px;height:102.24px"><span class="leer" style="transform:scaleX(0.947);transform-origin:50% 50%">Leer</span></div>
<div class="cell c" style="left:2182.5px;top:1790.24px;width:157px;height:102.24px"><span class="badge"><span style="transform:scaleX(0.94);transform-origin:50% 50%">Sent</span></span></div>
<div class="cell" style="left:2339.5px;top:1790.24px;width:192.9px;height:102.24px"><div><div><span style="transform:scaleX(1.035);transform-origin:0 50%;margin-left:-1.5px">2022-06-28</span></div><div><span style="transform:scaleX(0.99);transform-origin:0 50%;margin-left:-1.5px">06:07:18</span></div></div></div>
<div class="cell" style="left:2532.4px;top:1790.24px;width:260px;height:102.24px"><span class="leer" style="transform:scaleX(0.947);transform-origin:0 50%;margin-left:-2px">Leer</span></div>
<div class="cell" style="left:2792.4px;top:1790.24px;width:165px;height:102.24px"><div><div><span style="transform:scaleX(1.035);transform-origin:0 50%;margin-left:-1.5px">2022-06-27</span></div><div><span style="transform:scaleX(0.99);transform-origin:0 50%;margin-left:-1.5px">10:28:45</span></div></div></div>
<div class="cell c" style="left:2957.4px;top:1790.24px;width:290.2px;height:102.24px"><span class="ico"><svg width="23" height="23" viewBox="0 0 23 23"><rect x="0" y="0" width="23" height="23" rx="4.5" fill="#0d88d8"/><path d="M5.2 16.2 L13.6 7.8" stroke="#fff" stroke-width="3.2" stroke-linecap="butt"/><path d="M9.6 4.4 H18.6 V13.4 Z" fill="#fff"/></svg></span></div>
<div class="a cb" style="left:16.1px;top:1929.48px"></div>
<div class="cell" style="left:61.5px;top:1892.48px;width:224.8px;height:102.24px"><div><div><span style="transform:scaleX(0.993);transform-origin:0 50%;margin-left:-2px">Excel Mailer</span></div></div></div>
<div class="cell" style="left:286.3px;top:1892.48px;width:306.3px;height:102.24px"><div><div><span style="transform:scaleX(1.017);transform-origin:0 50%">admin@calhelp.de</span></div></div></div>
<div class="cell" style="left:592.6px;top:1892.48px;width:248.8px;height:102.24px"><div><div><span style="transform:scaleX(1.035);transform-origin:0 50%;margin-left:-2px">Super Admin</span></div></div></div>
<div class="cell c" style="left:841.4px;top:1892.48px;width:201.1px;height:102.24px"><div><div><span>User</span></div></div></div>
<div class="cell c" style="left:1042.5px;top:1892.48px;width:189.8px;height:102.24px"><div><div><span>0</span></div></div></div>
<div class="cell" style="left:1232.3px;top:1892.48px;width:197px;height:102.24px"><div><div><span>excel</span></div></div></div>
<div class="cell c" style="left:1429.3px;top:1892.48px;width:204.1px;height:102.24px"><span class="leer" style="transform:scaleX(0.947);transform-origin:50% 50%">Leer</span></div>
<div class="cell" style="left:1633.4px;top:1892.48px;width:225.1px;height:102.24px"><div><div><span style="margin-left:-2px">Link</span></div></div></div>
<div class="cell c" style="left:1858.5px;top:1892.48px;width:324px;height:102.24px"><span class="leer" style="transform:scaleX(0.947);transform-origin:50% 50%">Leer</span></div>
<div class="cell c" style="left:2182.5px;top:1892.48px;width:157px;height:102.24px"><span class="badge"><span style="transform:scaleX(0.94);transform-origin:50% 50%">Sent</span></span></div>
<div class="cell" style="left:2339.5px;top:1892.48px;width:192.9px;height:102.24px"><div><div><span style="transform:scaleX(1.035);transform-origin:0 50%;margin-left:-1.5px">2022-06-28</span></div><div><span style="transform:scaleX(0.99);transform-origin:0 50%;margin-left:-1.5px">06:07:13</span></div></div></div>
<div class="cell" style="left:2532.4px;top:1892.48px;width:260px;height:102.24px"><span class="leer" style="transform:scaleX(0.947);transform-origin:0 50%;margin-left:-2px">Leer</span></div>
<div class="cell" style="left:2792.4px;top:1892.48px;width:165px;height:102.24px"><div><div><span style="transform:scaleX(1.035);transform-origin:0 50%;margin-left:-1.5px">2022-06-27</span></div><div><span style="transform:scaleX(0.99);transform-origin:0 50%;margin-left:-1.5px">10:28:45</span></div></div></div>
<div class="cell c" style="left:2957.4px;top:1892.48px;width:290.2px;height:102.24px"><span class="ico"><svg width="23" height="23" viewBox="0 0 23 23"><rect x="0" y="0" width="23" height="23" rx="4.5" fill="#0d88d8"/><path d="M5.2 16.2 L13.6 7.8" stroke="#fff" stroke-width="3.2" stroke-linecap="butt"/><path d="M9.6 4.4 H18.6 V13.4 Z" fill="#fff"/></svg></span></div>
<div class="a cb" style="left:16.1px;top:2031.72px"></div>
<div class="cell" style="left:61.5px;top:1994.72px;width:224.8px;height:102.24px"><div><div><span style="transform:scaleX(1.054);transform-origin:0 50%;margin-left:-1.8px">monatlicher</span></div><div><span style="transform:scaleX(1.046);transform-origin:0 50%;margin-left:-1.3px">Abruf</span></div></div></div>
<div class="cell" style="left:286.3px;top:1994.72px;width:306.3px;height:102.24px"><div><div><span style="transform:scaleX(1.02);transform-origin:0 50%">demo@calhelp.de</span></div></div></div>
<div class="cell" style="left:592.6px;top:1994.72px;width:248.8px;height:102.24px"><div><div><span style="transform:scaleX(1.047);transform-origin:0 50%;margin-left:-2px">Mein Demo</span></div></div></div>
<div class="cell c" style="left:841.4px;top:1994.72px;width:201.1px;height:102.24px"><div><div><span>User</span></div></div></div>
<div class="cell c" style="left:1042.5px;top:1994.72px;width:189.8px;height:102.24px"><div><div><span>1</span></div></div></div>
<div class="cell" style="left:1232.3px;top:1994.72px;width:197px;height:102.24px"><div><div><span style="transform:scaleX(1.082);transform-origin:0 50%;margin-left:-1.8px">pdf_html</span></div></div></div>
<div class="cell c" style="left:1429.3px;top:1994.72px;width:204.1px;height:102.24px"><span class="ico"><svg width="23" height="23" viewBox="0 0 23 23"><rect x="0" y="0" width="23" height="23" rx="4.5" fill="#0d88d8"/><path d="M5.2 16.2 L13.6 7.8" stroke="#fff" stroke-width="3.2" stroke-linecap="butt"/><path d="M9.6 4.4 H18.6 V13.4 Z" fill="#fff"/></svg></span></div>
<div class="cell" style="left:1633.4px;top:1994.72px;width:225.1px;height:102.24px"><div><div><span style="transform:scaleX(0.984);transform-origin:0 50%">File</span></div></div></div>
<div class="cell c" style="left:1858.5px;top:1994.72px;width:324px;height:102.24px"><span class="lnk">1</span></div>
<div class="cell c" style="left:2182.5px;top:1994.72px;width:157px;height:102.24px"><span class="badge"><span style="transform:scaleX(0.94);transform-origin:50% 50%">Sent</span></span></div>
<div class="cell" style="left:2339.5px;top:1994.72px;width:192.9px;height:102.24px"><div><div><span style="transform:scaleX(1.035);transform-origin:0 50%;margin-left:-1.5px">2021-05-06</span></div><div><span style="transform:scaleX(0.99);transform-origin:0 50%;margin-left:-1.5px">09:33:02</span></div></div></div>
<div class="cell" style="left:2532.4px;top:1994.72px;width:260px;height:102.24px"><span class="leer" style="transform:scaleX(0.947);transform-origin:0 50%;margin-left:-2px">Leer</span></div>
<div class="cell" style="left:2792.4px;top:1994.72px;width:165px;height:102.24px"><div><div><span style="transform:scaleX(1.035);transform-origin:0 50%;margin-left:-1.5px">2021-05-06</span></div><div><span style="transform:scaleX(0.99);transform-origin:0 50%;margin-left:-1.5px">09:30:25</span></div></div></div>
<div class="cell c" style="left:2957.4px;top:1994.72px;width:290.2px;height:102.24px"><span class="ico"><svg width="23" height="23" viewBox="0 0 23 23"><rect x="0" y="0" width="23" height="23" rx="4.5" fill="#0d88d8"/><path d="M5.2 16.2 L13.6 7.8" stroke="#fff" stroke-width="3.2" stroke-linecap="butt"/><path d="M9.6 4.4 H18.6 V13.4 Z" fill="#fff"/></svg></span></div>
<div class="a cb" style="left:16.1px;top:2133.96px"></div>
<div class="cell" style="left:61.5px;top:2096.96px;width:224.8px;height:102.24px"><div><div><span style="transform:scaleX(1.054);transform-origin:0 50%;margin-left:-1.8px">monatlicher</span></div><div><span style="transform:scaleX(1.046);transform-origin:0 50%;margin-left:-1.3px">Abruf</span></div></div></div>
<div class="cell" style="left:286.3px;top:2096.96px;width:306.3px;height:102.24px"><div><div><span style="transform:scaleX(1.031);transform-origin:0 50%">kunde-1@calhelp.de</span></div></div></div>
<div class="cell" style="left:592.6px;top:2096.96px;width:248.8px;height:102.24px"><div><div><span style="transform:scaleX(0.948);transform-origin:0 50%;margin-left:-2px">S.C Kunde</span></div></div></div>
<div class="cell c" style="left:841.4px;top:2096.96px;width:201.1px;height:102.24px"><div><div><span>User</span></div></div></div>
<div class="cell c" style="left:1042.5px;top:2096.96px;width:189.8px;height:102.24px"><div><div><span>1</span></div></div></div>
<div class="cell" style="left:1232.3px;top:2096.96px;width:197px;height:102.24px"><div><div><span style="transform:scaleX(1.082);transform-origin:0 50%;margin-left:-1.8px">pdf_html</span></div></div></div>
<div class="cell c" style="left:1429.3px;top:2096.96px;width:204.1px;height:102.24px"><span class="ico"><svg width="23" height="23" viewBox="0 0 23 23"><rect x="0" y="0" width="23" height="23" rx="4.5" fill="#0d88d8"/><path d="M5.2 16.2 L13.6 7.8" stroke="#fff" stroke-width="3.2" stroke-linecap="butt"/><path d="M9.6 4.4 H18.6 V13.4 Z" fill="#fff"/></svg></span></div>
<div class="cell" style="left:1633.4px;top:2096.96px;width:225.1px;height:102.24px"><div><div><span style="transform:scaleX(0.984);transform-origin:0 50%">File</span></div></div></div>
<div class="cell c" style="left:1858.5px;top:2096.96px;width:324px;height:102.24px"><span class="lnk">1</span></div>
<div class="cell c" style="left:2182.5px;top:2096.96px;width:157px;height:102.24px"><span class="badge"><span style="transform:scaleX(0.94);transform-origin:50% 50%">Sent</span></span></div>
<div class="cell" style="left:2339.5px;top:2096.96px;width:192.9px;height:102.24px"><div><div><span style="transform:scaleX(1.035);transform-origin:0 50%;margin-left:-1.5px">2021-05-06</span></div><div><span style="transform:scaleX(0.99);transform-origin:0 50%;margin-left:-1.5px">09:32:02</span></div></div></div>
<div class="cell" style="left:2532.4px;top:2096.96px;width:260px;height:102.24px"><span class="leer" style="transform:scaleX(0.947);transform-origin:0 50%;margin-left:-2px">Leer</span></div>
<div class="cell" style="left:2792.4px;top:2096.96px;width:165px;height:102.24px"><div><div><span style="transform:scaleX(1.035);transform-origin:0 50%;margin-left:-1.5px">2021-05-06</span></div><div><span style="transform:scaleX(0.99);transform-origin:0 50%;margin-left:-1.5px">09:30:25</span></div></div></div>
<div class="cell c" style="left:2957.4px;top:2096.96px;width:290.2px;height:102.24px"><span class="ico"><svg width="23" height="23" viewBox="0 0 23 23"><rect x="0" y="0" width="23" height="23" rx="4.5" fill="#0d88d8"/><path d="M5.2 16.2 L13.6 7.8" stroke="#fff" stroke-width="3.2" stroke-linecap="butt"/><path d="M9.6 4.4 H18.6 V13.4 Z" fill="#fff"/></svg></span></div>
<div class="a" style="left:25px;top:2215.3px;width:165.9px;height:61.5px;background:#dc3545;border-radius:8px 0 0 8px"></div>
<div class="a" style="left:190.9px;top:2215.3px;width:43.7px;height:61.5px;background:#bd2332;border-radius:0 8px 8px 0"></div>
<div class="a caret" style="left:206.2px;top:2242.6px;border-top-color:#fff;border-left-width:7px;border-right-width:7px;border-top-width:7.3px"></div>
<svg class="a" style="left:47.6px;top:2232px" width="21" height="24" viewBox="0 0 21 24"><path d="M6.5 3.5 V1.5 H14.5 V3.5" fill="none" stroke="#fff" stroke-width="1.8"/><path d="M0.5 4 H20.5" stroke="#fff" stroke-width="2"/><path d="M2.8 5 V21 Q2.8 23 4.8 23 H16.2 Q18.2 23 18.2 21 V5" fill="none" stroke="#fff" stroke-width="2"/><path d="M7 8 V19.5 M10.5 8 V19.5 M14 8 V19.5" stroke="#fff" stroke-width="2"/></svg>
<div class="a" style="left:75.8px;top:2230.8px;font-size:24.8px;line-height:30px;color:#fff;white-space:nowrap">Löschen</div>
<div class="a" style="left:0;top:2293.2px;width:3242px;height:22.6px;background:#f8f8f8"></div>
<div class="a" style="left:5.8px;top:2298.5px;width:0;height:0;border-top:6px solid transparent;border-bottom:6px solid transparent;border-right:11.3px solid #7a7a7a"></div>
<div class="a" style="left:26.4px;top:2298.1px;width:2984.2px;height:12.6px;background:#8c8c8c;border-radius:6.3px"></div>
<div class="a" style="left:3224.8px;top:2298.5px;width:0;height:0;border-top:6px solid transparent;border-bottom:6px solid transparent;border-left:11.3px solid #7a7a7a"></div>
</div>
<div class="a ft" style="left:49.6px;top:2554.46px;transform:scaleX(1.01);transform-origin:0 0">Zeige Ergebnisse 1-20 von 174.</div>
<div class="a" style="left:418px;top:2541.1px;width:101.9px;height:52.7px;border:1.6px solid #7a7a7a;border-radius:8px;background:#fff"></div>
<div class="a ft" style="left:436.4px;top:2554.46px">20</div>
<svg class="a" style="left:496.4px;top:2562px" width="16" height="9" viewBox="0 0 16 9"><path d="M1 1 L8 7.6 L15 1" fill="none" stroke="#666" stroke-width="1.8"/></svg>
<div class="a ft" style="left:526.8px;top:2554.46px;transform:scaleX(1.03);transform-origin:0 0">Zeilen pro seite.</div>
<div class="a pg" style="left:2935.4px;top:2541px;width:62.4px;border-color:#c8c8c8;color:#c4c4c4"><svg style="margin-top:2px" width="30" height="28" viewBox="0 0 30 28"><path d="M28 14 H2 M14 1.5 L1.8 14 L14 26.5" fill="none" stroke="#c4c4c4" stroke-width="2.2"/></svg></div>
<div class="a pg" style="left:3009px;top:2541px;width:60px;border-color:#0d7ef5;color:#0d7ef5">1</div>
<div class="a pg" style="left:3080.9px;top:2541px;width:60px;border-color:#808080;color:#555">2</div>
<div class="a pg" style="left:3151.8px;top:2541px;width:60px;border-color:#808080;color:#555">3</div>
<div class="a pg" style="left:3223.3px;top:2541px;width:62.4px;border-color:#808080;color:#555"><svg style="margin-top:2px" width="30" height="28" viewBox="0 0 30 28"><path d="M2 14 H28 M16 1.5 L28.2 14 L16 26.5" fill="none" stroke="#555" stroke-width="2.2"/></svg></div>
</div></body></html>
